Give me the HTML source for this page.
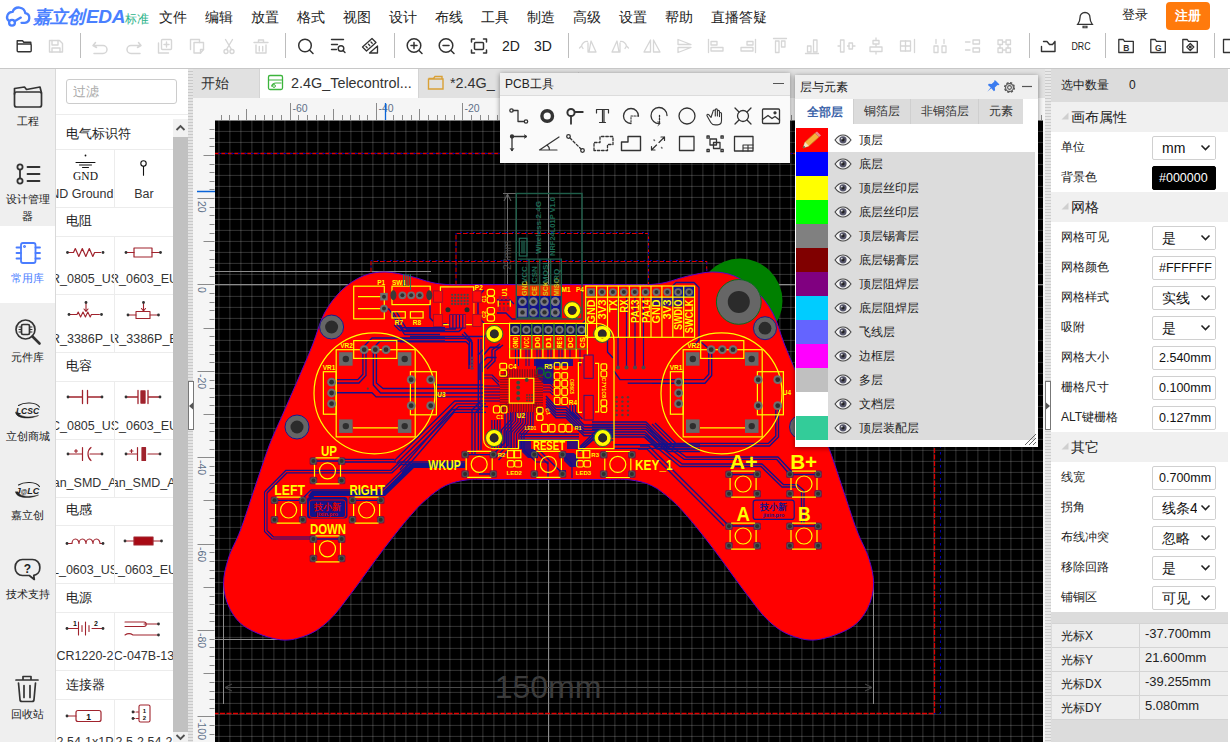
<!DOCTYPE html><html><head><meta charset="utf-8"><title>EDA</title><style>
*{box-sizing:border-box}
html,body{margin:0;padding:0}
body{width:1230px;height:742px;overflow:hidden;position:relative;background:#fff;font-family:"Liberation Sans",sans-serif;font-size:13px;color:#222}
.abs{position:absolute}
#menubar{position:absolute;left:0;top:0;width:1230px;height:32px;background:#fff}
.mi{position:absolute;top:8px;font-size:14px;color:#222;white-space:nowrap;line-height:18px}
#toolbar{position:absolute;left:0;top:32px;width:1230px;height:36px;background:#fff}
#hline{position:absolute;left:0;top:68px;width:1230px;height:1px;background:#c8c8c8}
.tsep{position:absolute;top:1px;width:1px;height:25px;background:#bdbdbd}
#leftnav{position:absolute;left:0;top:69px;width:56px;height:673px;background:#efefef;border-right:1px solid #d9d9d9}
.nv{position:absolute;left:0;width:55px;text-align:center;font-size:11px;color:#222;line-height:17px}
#lib{position:absolute;left:56px;top:69px;width:132px;height:673px;background:#fff;overflow:hidden}
.lh{position:absolute;left:10px;font-size:13px;color:#222;line-height:18px;white-space:nowrap}
.ll{position:absolute;font-size:12.5px;color:#333;line-height:18px;height:18px;overflow:hidden}
.ll span{position:absolute;left:50%;top:0;transform:translateX(-50%);white-space:nowrap}
.hl{position:absolute;left:0;width:117px;height:1px;background:#ececec}
.vl{position:absolute;left:58px;width:1px;background:#ececec}
#split1{position:absolute;left:188px;top:69px;width:5px;height:673px;background:#e4e4e4 repeating-linear-gradient(180deg,rgba(255,255,255,.0) 0 2px,rgba(120,120,120,.25) 2px 3px)}
#tabs{position:absolute;left:193px;top:69px;width:852px;height:29px;background:#e1e1e1}
.tab{position:absolute;top:0;height:29px;font-size:14.4px;line-height:29px;color:#333;white-space:nowrap}
#rpanel{position:absolute;left:1051px;top:69px;width:179px;height:673px;background:#fff;font-size:12px}
.rsec{position:absolute;left:0;width:177px;height:30px;background:#f0f0f0;font-size:14px;line-height:30px;padding-left:20px;color:#222}
.rl{position:absolute;left:10px;font-size:12px;line-height:30px;color:#222;white-space:nowrap}
.rin{position:absolute;left:101px;width:64px;height:24px;border:1px solid #d0d0d0;border-radius:2px;background:#fff;font-size:12.5px;line-height:22px;padding-left:6px;color:#111;white-space:nowrap;overflow:hidden}
.fl{position:absolute;background:#fff;box-shadow:0 1px 5px rgba(0,0,0,.45)}
.lrow{position:absolute;left:33px;width:207px;height:24px;background:#dcdcdc;font-size:12px;line-height:24px;color:#222}
.lsw{position:absolute;left:1px;width:32px;height:24px}
</style></head><body><div id="menubar"><svg class="abs" style="left:0;top:0" width="32" height="32" viewBox="0 0 32 32" fill="none" stroke="#4a80ff" stroke-width="2.300" stroke-linecap="round"><path d="M21.500 22.800H24.800A4.900 4.900 0 0 0 25.300 13.100A6.600 6.600 0 0 0 12.600 11.800A5.300 5.300 0 0 0 8.800 21"/><circle cx="12" cy="22.800" r="2.900"/><path d="M14.600 21.300L20.800 17.600"/></svg><div class="abs" style="left:33px;top:5px;font-size:18px;line-height:24px;font-weight:bold;font-style:italic;color:#4a80ff;white-space:nowrap;letter-spacing:-1px">嘉立创<span style="letter-spacing:-.3px;font-size:19px;margin-left:2px">EDA</span></div><div class="abs" style="left:125px;top:12px;font-size:12px;line-height:14px;color:#2bb38a;white-space:nowrap;letter-spacing:-.5px">标准</div><div class="mi" style="left:159px">文件</div><div class="mi" style="left:205px">编辑</div><div class="mi" style="left:251px">放置</div><div class="mi" style="left:297px">格式</div><div class="mi" style="left:343px">视图</div><div class="mi" style="left:389px">设计</div><div class="mi" style="left:435px">布线</div><div class="mi" style="left:481px">工具</div><div class="mi" style="left:527px">制造</div><div class="mi" style="left:573px">高级</div><div class="mi" style="left:619px">设置</div><div class="mi" style="left:665px">帮助</div><div class="mi" style="left:711px">直播答疑</div><svg class="abs" style="left:1075px;top:10px" width="20" height="20" viewBox="0 0 20 20"><path d="M10 2.500c-3 0-5 2.300-5 5.200 0 3.600-1.500 5.600-2.300 6.600h14.600c-.800-1-2.300-3-2.300-6.600 0-2.900-2-5.200-5-5.200z" fill="none" stroke="#333" stroke-width="1.300"/><path d="M8 16.300h4v1.500H8z" fill="none" stroke="#333" stroke-width="1.100"/></svg><div class="mi" style="left:1122px;top:6px;font-size:13px">登录</div><div class="abs" style="left:1166px;top:2px;width:44px;height:28px;border-radius:4px;background:#ff7a0c;color:#fff;font-weight:bold;font-size:13px;line-height:28px;text-align:center">注册</div></div><div id="toolbar"><div class="tsep" style="left:80px"></div><div class="tsep" style="left:285px"></div><div class="tsep" style="left:394px"></div><div class="tsep" style="left:568px"></div><div class="tsep" style="left:1029px"></div><div class="tsep" style="left:1105px"></div><div class="tsep" style="left:1214px"></div><svg class="abs" style="left:0;top:0" width="1230" height="36" viewBox="0 32 1230 36" fill="none" stroke-linecap="round" stroke-linejoin="round"><g stroke="#333" stroke-width="1.4"><path d="M17.200 44V40.700h5.300l1.300 1.600h7V44"/><rect x="17.200" y="44" width="14" height="7.800" rx="1"/></g><g stroke="#d6d6d6" stroke-width="1.4"><path d="M49.500 40.500h10l3 3v8.500h-13z"/><path d="M52 40.500v4.500h6v-4.500M52 52v-4h8v4"/></g><g stroke="#d6d6d6" stroke-width="1.5"><path d="M95.500 42.500l-2.500 3 3.500 2M93.500 45.500h9.500a4 4 0 0 1 0 8h-9"/></g><g stroke="#d6d6d6" stroke-width="1.5"><path d="M138.500 42.500l2.500 3-3.500 2M140.500 45.500h-9.500a4 4 0 0 0 0 8h9"/></g><g stroke="#d6d6d6" stroke-width="1.4"><rect x="161.500" y="39.500" width="10" height="10" rx="1"/><path d="M158.500 43v10h10M166.500 42v5M164 44.500h5"/></g><g stroke="#d6d6d6" stroke-width="1.4"><path d="M190.500 49.500v-10h9v3"/><path d="M194 42.500h9.500v7l-3 3.500H194z"/><path d="M203.500 49.500h-3v3.500"/></g><g stroke="#d6d6d6" stroke-width="1.4"><path d="M225.500 39.500l6 10M232.500 39.500l-6 10"/><circle cx="226" cy="51.500" r="2"/><circle cx="232" cy="51.500" r="2"/></g><g stroke="#d6d6d6" stroke-width="1.4"><path d="M254 42.500h14M258.500 42.500v-2.500h5v2.500M256 45v8h10v-8M259.300 46.500v4.500M262.700 46.500v4.500"/></g><g stroke="#333" stroke-width="1.5"><circle cx="305" cy="45.500" r="6.300"/><path d="M309.500 50l3.500 3.500"/></g><g stroke="#333" stroke-width="1.4"><path d="M331.500 39.500h12M331.500 44.500h6M331.500 49.500h5"/><circle cx="341" cy="48.500" r="2.800"/><path d="M343 50.500l2 2"/></g><g stroke="#333" stroke-width="1.3"><path d="M362.500 47l9.500-8.500 4 4-9.500 8.500z"/><path d="M366 46.500l1.200 1.200M368.500 44.300l1.200 1.200M371 42l1.200 1.200"/><path d="M377.500 46v7h-8z"/></g><g stroke="#333" stroke-width="1.5"><circle cx="414" cy="45.500" r="6.800"/><path d="M419 50.500l3 3M411 45.500h6M414 42.500v6"/></g><g stroke="#333" stroke-width="1.5"><circle cx="446" cy="45.500" r="6.800"/><path d="M451 50.500l3 3M443 45.500h6"/></g><g stroke="#333" stroke-width="1.5"><path d="M471.500 42v-3h3M483.500 39h3v3M486.500 50v3h-3M474.500 53h-3v-3"/><rect x="474.500" y="42.500" width="9" height="7" rx="1"/></g><g stroke="#d6d6d6" stroke-width="1.3"><path d="M589 52h7l-5-11zM588 52v-9M581.500 46.500a5.500 5.500 0 0 1 6-5M583 48.500l-1.500-2.500-2 2"/></g><g stroke="#d6d6d6" stroke-width="1.3"><path d="M619 52h-7l5-11zM620 52v-9M626.500 46.500a5.500 5.500 0 0 0-6-5M625 48.500l1.500-2.500 2 2"/></g><g stroke="#d6d6d6" stroke-width="1.3"><path d="M650.500 40v12h-6.500zM653.500 40v12h6.500z"/></g><g stroke="#d6d6d6" stroke-width="1.3"><path d="M678 39.500v5h13zM678 52.500v-5h13z"/></g><g stroke="#d6d6d6" stroke-width="1.3"><path d="M708.500 39.500v13"/><rect x="711" y="41.500" width="6" height="3.500"/><rect x="711" y="47.500" width="12" height="3.500"/></g><g stroke="#d6d6d6" stroke-width="1.3"><path d="M755.500 39.500v13"/><rect x="747" y="41.500" width="6" height="3.500"/><rect x="741" y="47.500" width="12" height="3.500"/></g><g stroke="#d6d6d6" stroke-width="1.3"><path d="M773.500 38.500h13"/><rect x="775.500" y="41" width="3.500" height="11.500"/><rect x="781.500" y="41" width="3.500" height="6"/></g><g stroke="#d6d6d6" stroke-width="1.3"><path d="M805.500 53.500h13"/><rect x="807.500" y="46" width="3.500" height="6"/><rect x="813.500" y="40" width="3.500" height="12"/></g><g stroke="#d6d6d6" stroke-width="1.3"><path d="M838 46h2M847.500 46h1.500M853 46h2"/><rect x="840.500" y="40" width="3.500" height="12"/><rect x="849" y="43" width="3.500" height="6"/></g><g stroke="#d6d6d6" stroke-width="1.3"><path d="M876 38v2M876 44.500v2M876 52v2"/><rect x="873" y="40.500" width="6" height="3.500"/><rect x="870" y="47" width="12" height="4.500"/></g><g stroke="#d6d6d6" stroke-width="1.3"><rect x="900.500" y="41" width="10" height="10"/><path d="M905.500 41v10M900.500 46h10M914.500 39.500v13"/></g><g stroke="#d6d6d6" stroke-width="1.3"><rect x="934" y="46" width="4" height="6.500"/><rect x="942" y="46" width="4" height="6.500"/><path d="M936 39.500v4M944 39.500v4"/></g><g stroke="#d6d6d6" stroke-width="1.3"><rect x="973" y="40" width="6.500" height="4"/><rect x="973" y="48" width="6.500" height="4"/><path d="M965.500 42h4.500M965.500 50h4.500"/></g><g stroke="#d6d6d6" stroke-width="1.3"><rect x="998" y="40" width="4.500" height="4.500"/><rect x="1006" y="40" width="4.500" height="4.500"/><rect x="998" y="48" width="4.500" height="4.500"/><rect x="1006" y="48" width="4.500" height="4.500"/><path d="M1002.500 42h3.500M1002.500 50h3.500M1000 44.500v3.500M1008 44.500v3.500"/></g><g stroke="#333" stroke-width="1.4"><path d="M1043.500 41.500h3.500l2.500 3h3l2.500-3M1055 41.500v10h-13.500v-5"/></g><g stroke="#333" stroke-width="1.3"><path d="M1118.8 39.500h4.500l1.200 1.800h8.800v11.200h-14.500z"/></g><text x="1126.3" y="51" font-size="8.500" font-weight="bold" fill="#333" stroke="none" text-anchor="middle" font-family="Liberation Sans, sans-serif">B</text><g stroke="#333" stroke-width="1.3"><path d="M1150.8 39.500h4.500l1.200 1.800h8.800v11.200h-14.500z"/></g><text x="1158.3" y="51" font-size="8.500" font-weight="bold" fill="#333" stroke="none" text-anchor="middle" font-family="Liberation Sans, sans-serif">G</text><g stroke="#333" stroke-width="1.3"><path d="M1182.800 39.500h4.500l1.200 1.800h8.800v11.200h-14.500z"/><path d="M1190.300 43.500l3.500 3.500-3.500 3.500-3.500-3.500z"/><circle cx="1190.300" cy="47" r=".8" fill="#333"/></g><g stroke="#333" stroke-width="1.3"><path d="M1230 39.500h-6.500v13h6.500"/></g></svg><div class="abs" style="left:500px;top:5px;width:22px;font-size:14px;line-height:18px;color:#222;text-align:center">2D</div><div class="abs" style="left:532px;top:5px;width:22px;font-size:14px;line-height:18px;color:#222;text-align:center">3D</div><div class="abs" style="left:1068px;top:7px;width:26px;font-size:11px;line-height:14px;color:#222;text-align:center;transform:scaleX(.8)">DRC</div></div><div id="hline"></div><div id="leftnav"><div class="abs" style="left:0;top:157px;width:55px;height:77px;background:#fff"></div><svg class="abs" style="left:0;top:0" width="55" height="673" viewBox="0 69 55 673" fill="none" stroke-linecap="round" stroke-linejoin="round"><g stroke="#333" stroke-width="1.7"><rect x="14.500" y="92" width="27" height="15" rx="2"/><path d="M14.500 94v-5.500l10-1.500 2 2.500 13.500-2.500 1.500 6"/></g><g stroke="#333" stroke-width="1.8"><circle cx="20" cy="167" r="2.600"/><circle cx="20" cy="181" r="2.600"/><path d="M20 169.600v8.800M27.500 167h12M27.500 174h12M27.500 181h12"/></g><g stroke="#4a7dff" stroke-width="1.8"><rect x="21" y="243" width="14.500" height="20" rx="2"/><path d="M16.500 247.500h4.500M16.500 253h4.500M16.500 258.500h4.500M35.500 247.500h4.500M35.500 253h4.500M35.500 258.500h4.500"/><circle cx="24.500" cy="246.500" r=".6"/></g><g stroke="#333" stroke-width="1.7"><circle cx="25.500" cy="329.500" r="9.500"/><path d="M32.500 336.500l7 7" stroke-width="2.600"/><rect x="21.500" y="324.500" width="8" height="10" rx="1.500"/><path d="M19 327h2.500M19 329.500h2.500M19 332h2.500M29.500 327h2.500M29.500 329.500h2.500M29.500 332h2.500" stroke-width="1"/></g><text x="27.500" y="414" font-size="8.500" font-weight="bold" font-style="italic" fill="#222" text-anchor="middle" font-family="Liberation Sans, sans-serif">LCSC</text><path d="M15.500 412.500C16.500 419 30 419.500 38.500 415.500C30 418 20 417.500 18 412.500Z" fill="#222" stroke="#222" stroke-width=".5"/><path d="M18.500 405.500C24 402 36 402 39.500 407" fill="none" stroke="#222" stroke-width="1.100"/><text x="27.500" y="493.500" font-size="9" font-weight="bold" font-style="italic" fill="#222" text-anchor="middle" font-family="Liberation Sans, sans-serif">J<tspan font-size="6.500">@</tspan>LC</text><path d="M15.500 492C16.500 498.500 30 499 38.500 495C30 497.500 20 497 18 492Z" fill="#222" stroke="#222" stroke-width=".5"/><path d="M18.500 485C24 481.500 36 481.500 39.500 486.500" fill="none" stroke="#222" stroke-width="1.100"/><g stroke="#333" stroke-width="1.7"><path d="M22.500 559.500h10a7.300 7.300 0 0 1 7.300 7.300v1.400a7.300 7.300 0 0 1-6 7.200l.500 4.100-5-4h-6.800a7.300 7.300 0 0 1-7.300-7.300v-1.400a7.300 7.300 0 0 1 7.300-7.300z"/></g><text x="27.500" y="572.500" font-size="12" font-weight="bold" fill="#222" text-anchor="middle" font-family="Liberation Sans, sans-serif">?</text><g stroke="#333" stroke-width="1.7"><path d="M16 680h22M23 680v-3.500h8V680M18.500 683l1.500 16.500a2 2 0 0 0 2 2h10a2 2 0 0 0 2-2l1.500-16.500M24 685.500v12M30 685.500v12"/></g></svg><div class="nv" style="top:44px;color:#222">工程</div><div class="nv" style="top:122px;color:#222">设计管理</div><div class="nv" style="top:139px;color:#222">器</div><div class="nv" style="top:201px;color:#4a7dff">常用库</div><div class="nv" style="top:280px;color:#222">元件库</div><div class="nv" style="top:359px;color:#222">立创商城</div><div class="nv" style="top:438px;color:#222">嘉立创</div><div class="nv" style="top:517px;color:#222">技术支持</div><div class="nv" style="top:637px;color:#222">回收站</div></div><div id="lib"><div class="abs" style="left:10px;top:10px;width:111px;height:25px;border:1px solid #ccc;border-radius:3px;font-size:13px;line-height:23px;padding-left:6px;color:#aaa">过滤</div><div class="hl" style="top:45px;width:132px"></div><div class="lh" style="top:56px">电气标识符</div><div class="lh" style="top:143px">电阻</div><div class="lh" style="top:288px">电容</div><div class="lh" style="top:432px">电感</div><div class="lh" style="top:519.5px">电源</div><div class="lh" style="top:606.5px">连接器</div><div class="hl" style="top:79.5px"></div><div class="hl" style="top:137.5px"></div><div class="vl" style="top:79.5px;height:58.0px"></div><div class="ll" style="left:0;width:58px;top:115.5px"><span style="margin-left:-8px">GND Ground</span></div><div class="ll" style="left:59px;width:58px;top:115.5px"><span>Bar</span></div><div class="hl" style="top:166.5px"></div><div class="hl" style="top:224.5px"></div><div class="vl" style="top:166.5px;height:58.0px"></div><div class="ll" style="left:0;width:58px;top:201px"><span>R_0805_US</span></div><div class="ll" style="left:59px;width:58px;top:201px"><span>R_0603_EU</span></div><div class="hl" style="top:224.5px"></div><div class="hl" style="top:283px"></div><div class="vl" style="top:224.5px;height:58.5px"></div><div class="ll" style="left:0;width:58px;top:260.5px"><span>R_3386P_U</span></div><div class="ll" style="left:59px;width:58px;top:260.5px"><span>R_3386P_E</span></div><div class="hl" style="top:312px"></div><div class="hl" style="top:370px"></div><div class="vl" style="top:312px;height:58px"></div><div class="ll" style="left:0;width:58px;top:347.5px"><span>C_0805_US</span></div><div class="ll" style="left:59px;width:58px;top:347.5px"><span>C_0603_EU</span></div><div class="hl" style="top:370px"></div><div class="hl" style="top:428px"></div><div class="vl" style="top:370px;height:58px"></div><div class="ll" style="left:0;width:58px;top:405px"><span>Tan_SMD_A1</span></div><div class="ll" style="left:59px;width:58px;top:405px"><span>Tan_SMD_A2</span></div><div class="hl" style="top:456px"></div><div class="hl" style="top:514px"></div><div class="vl" style="top:456px;height:58px"></div><div class="ll" style="left:0;width:58px;top:491.5px"><span>L_0603_US</span></div><div class="ll" style="left:59px;width:58px;top:491.5px"><span>L_0603_EU</span></div><div class="hl" style="top:543px"></div><div class="hl" style="top:601px"></div><div class="vl" style="top:543px;height:58px"></div><div class="ll" style="left:0;width:58px;top:578px"><span>CR1220-2</span></div><div class="ll" style="left:59px;width:58px;top:578px"><span>C-047B-13</span></div><div class="hl" style="top:630px"></div><div class="hl" style="top:688px"></div><div class="vl" style="top:630px;height:58px"></div><div class="ll" style="left:0;width:58px;top:664px"><span>2.54-1x1P</span></div><div class="ll" style="left:59px;width:58px;top:664px"><span>2.5-2.54-2</span></div><svg class="abs" style="left:0;top:0" width="117" height="673" viewBox="56 69 117 673" fill="none" stroke-linecap="round" stroke-linejoin="round"><g stroke="#111" stroke-width="1"><path d="M76 162.500h19M79.500 165h12M82.500 167.500h6"/></g><circle cx="85.5" cy="155.5" r="0.9" fill="#111" stroke="none"/><text x="85.500" y="180" font-size="11.500" fill="#111" stroke="none" text-anchor="middle" font-family="Liberation Serif, serif">GND</text><g stroke="#111" stroke-width="1.1"><circle cx="143.500" cy="163.500" r="2.700"/><path d="M143.500 166.300v9"/></g><g stroke="#a0232d" stroke-width="1.2"><path d="M67.500 252.500h6l1.800-4 3.500 8 3.500-8 3.500 8 3.500-8 3.500 8 1.800-4h6"/></g><circle cx="67.5" cy="252.5" r="1.4" fill="#333" stroke="none"/><circle cx="103" cy="252.5" r="1.4" fill="#333" stroke="none"/><g stroke="#a0232d" stroke-width="1.2"><path d="M126 252.500h8M152 252.500h8"/><rect x="134" y="248" width="18" height="9"/></g><circle cx="126" cy="252.5" r="1.4" fill="#333" stroke="none"/><circle cx="160.5" cy="252.5" r="1.4" fill="#333" stroke="none"/><g stroke="#a0232d" stroke-width="1.1"><path d="M69 314.500h8l1.200-2.500 2.400 5 2.400-5 2.400 5 2.400-5 2.400 5 1.200-2.500h8M86 303v8M84 309l2 2.500 2-2.500"/></g><circle cx="69" cy="314.5" r="1.4" fill="#333" stroke="none"/><circle cx="101.5" cy="314.5" r="1.4" fill="#333" stroke="none"/><circle cx="86" cy="302.5" r="1.4" fill="#333" stroke="none"/><g stroke="#a0232d" stroke-width="1.1"><path d="M128 315h8M150 315h8M143.500 303v7.500M141.500 308.500l2 2.500 2-2.500"/><rect x="136" y="311.500" width="14" height="7"/></g><circle cx="128" cy="315" r="1.4" fill="#333" stroke="none"/><circle cx="158.5" cy="315" r="1.4" fill="#333" stroke="none"/><circle cx="143.5" cy="302.5" r="1.4" fill="#333" stroke="none"/><g stroke="#a0232d" stroke-width="1.3"><path d="M68 397h14.500M87.500 397h14.500M82.500 390.500v13M87.500 390.500v13"/></g><circle cx="68" cy="397" r="1.4" fill="#333" stroke="none"/><circle cx="102" cy="397" r="1.4" fill="#333" stroke="none"/><g stroke="#a0232d" stroke-width="1.3"><path d="M126 397h12M148 397h12M138 390.500v13M148 390.500v13"/><rect x="141" y="391" width="4" height="12" fill="#a0232d"/></g><circle cx="126" cy="397" r="1.4" fill="#333" stroke="none"/><circle cx="160" cy="397" r="1.4" fill="#333" stroke="none"/><g stroke="#a0232d" stroke-width="1.2"><path d="M68 454h14M90 454h12M82.500 447.500v13M91 447.500c-4 3-4 10 0 13M76 449.500v3M74.500 451h3"/></g><circle cx="68" cy="454" r="1.4" fill="#333" stroke="none"/><circle cx="102" cy="454" r="1.4" fill="#333" stroke="none"/><g stroke="#a0232d" stroke-width="1.2"><path d="M126 454h11M148 454h12M137.500 447.500v13M131.500 449.500v3M130 451h3"/><rect x="142" y="447.500" width="3.500" height="13" fill="#a0232d"/></g><circle cx="126" cy="454" r="1.4" fill="#333" stroke="none"/><circle cx="160" cy="454" r="1.4" fill="#333" stroke="none"/><g stroke="#a0232d" stroke-width="1.2"><path d="M67 543.500h5a3.500 4.500 0 0 1 7 0a3.500 4.500 0 0 1 7 0a3.500 4.500 0 0 1 7 0a3.500 4.500 0 0 1 7 0h3"/></g><circle cx="67" cy="543.5" r="1.4" fill="#333" stroke="none"/><circle cx="103" cy="543.5" r="1.4" fill="#333" stroke="none"/><g stroke="#a0232d" stroke-width="1.2"><path d="M125 541h9M153 541h8"/><rect x="134" y="537" width="19" height="8" fill="#a80a14"/></g><circle cx="125" cy="541" r="1.4" fill="#333" stroke="none"/><circle cx="161.5" cy="541" r="1.4" fill="#333" stroke="none"/><g stroke="#a0232d" stroke-width="1.1"><path d="M67 628.500h11M92 628.500h11M78.500 622v13M82 625.500v6M85.500 622v13M89 625.500v6"/></g><circle cx="67" cy="628.5" r="1.4" fill="#333" stroke="none"/><circle cx="103" cy="628.5" r="1.4" fill="#333" stroke="none"/><text x="73" y="626" font-size="7" fill="#111" stroke="none" font-family="Liberation Sans, sans-serif" font-weight="bold">1</text><text x="94" y="626" font-size="7" fill="#111" stroke="none" font-family="Liberation Sans, sans-serif" font-weight="bold">2</text><g stroke="#a0232d" stroke-width="1.1"><path d="M125 622h7M125 626.500h7M132 622h12a2.200 2.200 0 0 1 0 4.500h-12M144 624h14M125 635c3-2 5-2 8 0h25"/></g><circle cx="158.5" cy="624" r="1.4" fill="#333" stroke="none"/><circle cx="158.5" cy="635" r="1.4" fill="#333" stroke="none"/><g stroke="#a0232d" stroke-width="1.2"><path d="M67 716h9"/><rect x="76" y="710.500" width="25" height="11" rx="2"/></g><circle cx="67" cy="716" r="1.4" fill="#333" stroke="none"/><text x="88.500" y="720" font-size="8.500" fill="#111" stroke="none" text-anchor="middle" font-family="Liberation Sans, sans-serif" font-weight="bold">1</text><g stroke="#a0232d" stroke-width="1.1"><rect x="139" y="705" width="11" height="17" rx="1.500"/><path d="M133 712h6M133 718.500h6" stroke-dasharray="2 1.500"/></g><circle cx="133" cy="712" r="1.4" fill="#333" stroke="none"/><circle cx="133" cy="718.5" r="1.4" fill="#333" stroke="none"/><text x="144.500" y="713" font-size="6" fill="#111" stroke="none" text-anchor="middle" font-family="Liberation Sans, sans-serif" font-weight="bold">1</text><text x="144.500" y="720" font-size="6" fill="#111" stroke="none" text-anchor="middle" font-family="Liberation Sans, sans-serif" font-weight="bold">2</text></svg><div class="abs" style="left:117px;top:50px;width:15px;height:623px;background:#f1f1f1"></div><div class="abs" style="left:117px;top:68px;width:15px;height:595px;background:#c1c1c1"></div><svg class="abs" style="left:117px;top:50px" width="15" height="623" viewBox="0 0 15 623"><path d="M3.500 11l4-4 4 4" fill="none" stroke="#505050" stroke-width="1.800"/><path d="M3.500 616l4 4 4-4" fill="none" stroke="#505050" stroke-width="1.800"/></svg></div><div id="split1"></div><div id="tabs"><div class="tab" style="left:8px;font-size:14px">开始</div><div class="tab" style="left:66px;width:160px;background:#fff;border-left:1px solid #d4d4d4;border-right:1px solid #d4d4d4;padding-left:31px">2.4G_Telecontrol...</div><div class="tab" style="left:257px">*2.4G_</div><svg class="abs" style="left:0;top:0" width="400" height="29" viewBox="193 69 400 29" fill="none"><rect x="268.500" y="75.500" width="14" height="14" rx="1.500" stroke="#3cb43c" stroke-width="1.300"/><path d="M269 80h13M271.500 86.500c.500-2 2-3.500 4.500-3.500h5.500" stroke="#3cb43c" stroke-width="1.200"/><circle cx="274" cy="86" r="1.400" stroke="#3cb43c" stroke-width="1"/><path d="M428.500 78.500h5l1.500-2h7v2.500M428.500 78.500v10.500h14.500V79h-14.500" stroke="#d9a036" stroke-width="1.400"/></svg><div class="abs" style="left:385px;top:3px;width:1px;height:24px;background:#cfcfcf"></div></div><div class="abs" id="cv" style="left:193px;top:98px;width:852px;height:644px;background:#f5f5f5;overflow:hidden"><svg class="abs" style="left:0;top:0" width="852" height="644" viewBox="193 98 852 644" font-family="Liberation Sans, sans-serif"><defs><pattern id="g" x="218" y="131" width="11" height="11" patternUnits="userSpaceOnUse"><rect x="0" y="0" width="1" height="11" fill="#fff" fill-opacity=".27"/><rect x="0" y="0" width="11" height="1" fill="#fff" fill-opacity=".27"/></pattern><clipPath id="cc"><rect x="215" y="120.500" width="828" height="622"/></clipPath></defs><path d="M221.5 120v-5M229.5 120v-5M238.5 120v-5M246.5 120v-11M255.5 120v-5M264.5 120v-5M272.5 120v-5M281.5 120v-5M290.5 120v-17M298.5 120v-5M307.5 120v-5M316.5 120v-5M324.5 120v-5M333.5 120v-11M342.5 120v-5M350.5 120v-5M359.5 120v-5M367.5 120v-5M376.5 120v-17M385.5 120v-5M393.5 120v-5M402.5 120v-5M411.5 120v-5M419.5 120v-11M428.5 120v-5M437.5 120v-5M445.5 120v-5M454.5 120v-5M462.5 120v-17M471.5 120v-5M480.5 120v-5M488.5 120v-5M497.5 120v-5M506.5 120v-11M514.5 120v-5M523.5 120v-5M532.5 120v-5M540.5 120v-5M549.5 120v-17M558.5 120v-5M566.5 120v-5M575.5 120v-5M583.5 120v-5M592.5 120v-11M601.5 120v-5M609.5 120v-5M618.5 120v-5M627.5 120v-5M635.5 120v-17M644.5 120v-5M653.5 120v-5M661.5 120v-5M670.5 120v-5M678.5 120v-11M687.5 120v-5M696.5 120v-5M704.5 120v-5M713.5 120v-5M722.5 120v-17M730.5 120v-5M739.5 120v-5M748.5 120v-5M756.5 120v-5M765.5 120v-11M774.5 120v-5M782.5 120v-5M791.5 120v-5M799.5 120v-5M808.5 120v-17M817.5 120v-5M825.5 120v-5M834.5 120v-5M843.5 120v-5M851.5 120v-11M860.5 120v-5M869.5 120v-5M877.5 120v-5M886.5 120v-5M894.5 120v-17M903.5 120v-5M912.5 120v-5M920.5 120v-5M929.5 120v-5M938.5 120v-11M946.5 120v-5M955.5 120v-5M964.5 120v-5M972.5 120v-5M981.5 120v-17M990.5 120v-5M998.5 120v-5M1007.5 120v-5M1015.5 120v-5M1024.5 120v-11M1033.5 120v-5M1041.5 120v-5M214.5 734.5h-5M214.5 725.5h-5M214.5 716.5h-17M214.5 708.5h-5M214.5 699.5h-5M214.5 691.5h-5M214.5 682.5h-5M214.5 673.5h-11M214.5 665.5h-5M214.5 656.5h-5M214.5 647.5h-5M214.5 639.5h-5M214.5 630.5h-17M214.5 621.5h-5M214.5 613.5h-5M214.5 604.5h-5M214.5 596.5h-5M214.5 587.5h-11M214.5 578.5h-5M214.5 570.5h-5M214.5 561.5h-5M214.5 552.5h-5M214.5 544.5h-17M214.5 535.5h-5M214.5 526.5h-5M214.5 518.5h-5M214.5 509.5h-5M214.5 500.5h-11M214.5 492.5h-5M214.5 483.5h-5M214.5 475.5h-5M214.5 466.5h-5M214.5 457.5h-17M214.5 449.5h-5M214.5 440.5h-5M214.5 431.5h-5M214.5 423.5h-5M214.5 414.5h-11M214.5 405.5h-5M214.5 397.5h-5M214.5 388.5h-5M214.5 380.5h-5M214.5 371.5h-17M214.5 362.5h-5M214.5 354.5h-5M214.5 345.5h-5M214.5 336.5h-5M214.5 328.5h-11M214.5 319.5h-5M214.5 310.5h-5M214.5 302.5h-5M214.5 293.5h-5M214.5 284.5h-17M214.5 276.5h-5M214.5 267.5h-5M214.5 259.5h-5M214.5 250.5h-5M214.5 241.5h-11M214.5 233.5h-5M214.5 224.5h-5M214.5 215.5h-5M214.5 207.5h-5M214.5 198.5h-17M214.5 189.5h-5M214.5 181.5h-5M214.5 172.5h-5M214.5 164.5h-5M214.5 155.5h-11M214.5 146.5h-5M214.5 138.5h-5M214.5 129.5h-5" stroke="#8a8a8a" stroke-width="1" fill="none"/><text x="292.5" y="111.500" font-size="10.500" fill="#5f7189">-60</text><text x="378.5" y="111.500" font-size="10.500" fill="#5f7189">-40</text><text x="464.5" y="111.500" font-size="10.500" fill="#5f7189">-20</text><text x="551.5" y="111.500" font-size="10.500" fill="#5f7189">0</text><text x="637.5" y="111.500" font-size="10.500" fill="#5f7189">20</text><text x="724.5" y="111.500" font-size="10.500" fill="#5f7189">40</text><text x="810.5" y="111.500" font-size="10.500" fill="#5f7189">60</text><text x="896.5" y="111.500" font-size="10.500" fill="#5f7189">80</text><text x="983.5" y="111.500" font-size="10.500" fill="#5f7189">100</text><text transform="translate(198 719) rotate(90)" font-size="10.500" fill="#5f7189">-100</text><text transform="translate(198 633) rotate(90)" font-size="10.500" fill="#5f7189">-80</text><text transform="translate(198 547) rotate(90)" font-size="10.500" fill="#5f7189">-60</text><text transform="translate(198 460) rotate(90)" font-size="10.500" fill="#5f7189">-40</text><text transform="translate(198 374) rotate(90)" font-size="10.500" fill="#5f7189">-20</text><text transform="translate(198 287) rotate(90)" font-size="10.500" fill="#5f7189">0</text><text transform="translate(198 201) rotate(90)" font-size="10.500" fill="#5f7189">20</text><path d="M385.500 103v17M197 191.500h18" stroke="#0a64d8" stroke-width="1.300"/><rect x="215" y="120.500" width="828" height="622" fill="#000"/><path d="M218.9 120V742M229.9 120V742M240.9 120V742M251.9 120V742M262.9 120V742M273.9 120V742M284.9 120V742M295.9 120V742M306.9 120V742M317.9 120V742M328.9 120V742M339.9 120V742M350.9 120V742M361.9 120V742M372.9 120V742M383.9 120V742M394.9 120V742M405.9 120V742M416.9 120V742M427.9 120V742M438.9 120V742M449.9 120V742M460.9 120V742M471.9 120V742M482.9 120V742M493.9 120V742M504.9 120V742M515.9 120V742M526.9 120V742M537.9 120V742M548.9 120V742M559.9 120V742M570.9 120V742M581.9 120V742M592.9 120V742M603.9 120V742M614.9 120V742M625.9 120V742M636.9 120V742M647.9 120V742M658.9 120V742M669.9 120V742M680.9 120V742M691.9 120V742M702.9 120V742M713.9 120V742M724.9 120V742M735.9 120V742M746.9 120V742M757.9 120V742M768.9 120V742M779.9 120V742M790.9 120V742M801.9 120V742M812.9 120V742M823.9 120V742M834.9 120V742M845.9 120V742M856.9 120V742M867.9 120V742M878.9 120V742M889.9 120V742M900.9 120V742M911.9 120V742M922.9 120V742M933.9 120V742M944.9 120V742M955.9 120V742M966.9 120V742M977.9 120V742M988.9 120V742M999.9 120V742M1010.9 120V742M1021.9 120V742M1032.9 120V742" stroke="#fff" stroke-opacity=".2" stroke-width="1" fill="none"/><path d="M215 131.4H1043M215 142.4H1043M215 153.4H1043M215 164.4H1043M215 175.4H1043M215 186.4H1043M215 197.4H1043M215 208.4H1043M215 219.4H1043M215 230.4H1043M215 241.4H1043M215 252.4H1043M215 263.4H1043M215 274.4H1043M215 285.4H1043M215 296.4H1043M215 307.4H1043M215 318.4H1043M215 329.4H1043M215 340.4H1043M215 351.4H1043M215 362.4H1043M215 373.4H1043M215 384.4H1043M215 395.4H1043M215 406.4H1043M215 417.4H1043M215 428.4H1043M215 439.4H1043M215 450.4H1043M215 461.4H1043M215 472.4H1043M215 483.4H1043M215 494.4H1043M215 505.4H1043M215 516.4H1043M215 527.4H1043M215 538.4H1043M215 549.4H1043M215 560.4H1043M215 571.4H1043M215 582.4H1043M215 593.4H1043M215 604.4H1043M215 615.4H1043M215 626.4H1043M215 637.4H1043M215 648.4H1043M215 659.4H1043M215 670.4H1043M215 681.4H1043M215 692.4H1043M215 703.4H1043M215 714.4H1043M215 725.4H1043M215 736.4H1043" stroke="#fff" stroke-opacity=".2" stroke-width="1" fill="none"/><g clip-path="url(#cc)"><path d="M215 271.500H431M215 639.500H282M223.500 583V704M873.500 583V704M548.500 120V742M215 284.500H1043" stroke="#8c8c8c" stroke-width="1" fill="none"/><path d="M225 687.500H872M225 687.500l7-3.500M225 687.500l7 3.500M872 687.500l-7-3.500M872 687.500l-7 3.500" stroke="#4a4a4a" stroke-width="1" fill="none"/><text x="548" y="698" font-size="32" fill="#3c3c3c" text-anchor="middle">150mm</text><path d="M507.500 194V320M504 201l3.500-7 3.500 7M503 193.500H517" stroke="#6a6a6a" stroke-width="1" fill="none"/><text transform="translate(510.500 270) rotate(-90)" font-size="10.500" fill="#4a4a4a">23mm</text><circle cx="740" cy="301" r="42.500" fill="#008000"/><path d="M215 153.500H934.500V713.500H215" stroke="#e00000" stroke-width="1.300" stroke-dasharray="5 1.500" fill="none"/><path d="M215 153.500H940.500V713.500H934" stroke="#0000b4" stroke-width="1" stroke-dasharray="2.500 4" stroke-dashoffset="3" fill="none"/><path d="M456 285V233.500H648.500V285M371 272V261.500H706.700V272" stroke="#e00000" stroke-width="1.100" stroke-dasharray="4.500 2" fill="none"/><path d="M456 285V232.500H648.500V285M371 272V260.500H706.700V272" stroke="#0000b4" stroke-width="1" stroke-dasharray="2 4.500" stroke-dashoffset="-4.500" fill="none"/><path d="M470 284.6C466.3 284.6 454.5 285 448 284.6C441.5 284.2 437.3 283.7 431 282.3C424.7 280.9 417.7 277.9 410 276.2C402.3 274.5 392.8 272 385 272C377.2 272 370.2 273 363 276C355.8 279 348.4 283.8 342 290C335.6 296.2 329.4 303.8 324.5 313C319.6 322.2 317.2 333.2 312.5 345C307.8 356.8 301.1 372.2 296 384C290.9 395.8 286.5 405.7 282 416C277.5 426.3 273.5 434.2 269 446C264.5 457.8 259.8 473 255 487C250.2 501 244.9 518.2 240.5 530C236.1 541.8 231.3 549 228.5 558C225.7 567 223.4 575.6 223.6 584C223.8 592.4 225.8 601 229.6 608.3C233.4 615.6 238 622.5 246.5 627.7C255 633 270.4 638.6 280.5 639.8C290.6 641 299.1 638.2 307.2 635C315.3 631.8 321.7 627.3 329 620.4C336.3 613.5 341.6 605.8 350.9 593.7C360.2 581.6 375.1 560.3 384.8 547.6C394.5 534.9 402.2 525.3 409.1 517.3C416 509.3 420 504.9 426.1 499.6C432.2 494.3 438.6 488.9 445.5 485.6C452.4 482.3 459.9 480.8 467.3 479.8C474.7 478.8 486.2 479.6 490 479.5L607.2 479.5C611 479.6 622.5 478.8 629.9 479.8C637.3 480.8 644.8 482.3 651.7 485.6C658.6 488.9 665 494.3 671.1 499.6C677.2 504.9 681.2 509.3 688.1 517.3C695 525.3 702.7 534.9 712.4 547.6C722.1 560.3 737 581.6 746.3 593.7C755.6 605.8 760.9 613.5 768.2 620.4C775.5 627.3 781.9 631.8 790 635C798.1 638.2 806.6 641 816.7 639.8C826.8 638.6 842.2 633 850.7 627.7C859.2 622.5 863.8 615.6 867.6 608.3C871.4 601 873.4 592.4 873.6 584C873.8 575.6 871.5 567 868.7 558C865.9 549 861.1 541.8 856.7 530C852.3 518.2 847 501 842.2 487C837.5 473 832.7 457.8 828.2 446C823.7 434.2 819.7 426.3 815.2 416C810.7 405.7 806.3 395.8 801.2 384C796.1 372.2 789.5 356.8 784.7 345C780 333.2 777.6 322.2 772.7 313C767.8 303.8 761.6 296.2 755.2 290C748.8 283.8 741.4 279 734.2 276C727 273 720 272 712.2 272C704.4 272 694.9 274.5 687.2 276.2C679.5 277.9 672.5 280.9 666.2 282.3C659.9 283.7 655.7 284.2 649.2 284.6C642.7 285 630.9 284.6 627.2 284.6Z" fill="#ff0000" stroke="#5a00c8" stroke-width="1"/><path d="M264.500 492V531.500L272 539H313.500" fill="none" stroke="#12128c" stroke-width="1.1" stroke-linejoin="round"/><path d="M267 493V530.500L273.500 537H313.500" fill="none" stroke="#12128c" stroke-width="1.1" stroke-linejoin="round"/><path d="M264.500 492L286 470.300H391L400 462H465" fill="none" stroke="#12128c" stroke-width="1.35" stroke-linejoin="round"/><path d="M267 493L287 472.800H392L401 464.500H465" fill="none" stroke="#12128c" stroke-width="1.35" stroke-linejoin="round"/><path d="M341.800 459.300H394.500" fill="none" stroke="#12128c" stroke-width="1.35" stroke-linejoin="round"/><path d="M341.800 462H396" fill="none" stroke="#12128c" stroke-width="1.35" stroke-linejoin="round"/><path d="M310 497.500L313 493.500H384L413 465.500H465" fill="none" stroke="#12128c" stroke-width="5"/><path d="M304 497L311 490H382L410 462.500" fill="none" stroke="#12128c" stroke-width="1.35" stroke-linejoin="round"/><rect x="307" y="497" width="40.500" height="21.500" rx="3" fill="#12128c"/><rect x="309.500" y="500" width="36" height="17.500" rx="2.500" fill="none" stroke="#e00000" stroke-width="1"/><path d="M274.400 500.300H303M352.600 500.300H381M313.500 539H341.600M313.500 461H341.600" fill="none" stroke="#12128c" stroke-width="1.35" stroke-linejoin="round"/><path d="M362.900 352V374.200L357.800 379.600H336.900M366 352V375.500L359 383H336.900" fill="none" stroke="#12128c" stroke-width="1.35" stroke-linejoin="round"/><path d="M376.400 352V383L383 388.500H483M373.300 352V385L380.500 393H483" fill="none" stroke="#12128c" stroke-width="1.35" stroke-linejoin="round"/><path d="M336 392.700H372L376 396.900H483" fill="none" stroke="#12128c" stroke-width="1.35" stroke-linejoin="round"/><path d="M364.200 346L372 338H445M375.300 346L380 341H445" fill="none" stroke="#12128c" stroke-width="1.35" stroke-linejoin="round"/><path d="M394.200 325L399.700 330.500H445M397 325L401 327.700H445" fill="none" stroke="#12128c" stroke-width="1.35" stroke-linejoin="round"/><path d="M430.700 379.700L436 385H483" fill="none" stroke="#12128c" stroke-width="1.35" stroke-linejoin="round"/><circle cx="367.800" cy="388.700" r="1.100" fill="#5a3a3a"/><path d="M394.5 460.6L454.7 401L484 401" fill="none" stroke="#12128c" stroke-width="1.35" stroke-linejoin="round"/><path d="M396.5 463.4L456.7 403.8L486 403.8" fill="none" stroke="#12128c" stroke-width="1.35" stroke-linejoin="round"/><path d="M398.5 466.2L458.7 406.6L488 406.6" fill="none" stroke="#12128c" stroke-width="1.35" stroke-linejoin="round"/><path d="M400 470L452 409.5L484 409.5" fill="none" stroke="#12128c" stroke-width="1.35" stroke-linejoin="round"/><path d="M402 472.8L454 412.3L486 412.3" fill="none" stroke="#12128c" stroke-width="1.35" stroke-linejoin="round"/><path d="M478.3 339L478.3 450" fill="none" stroke="#12128c" stroke-width="1.35" stroke-linejoin="round"/><path d="M481 339L481 450" fill="none" stroke="#12128c" stroke-width="1.35" stroke-linejoin="round"/><path d="M400 341.700H466L469 344.700V369M400 338.500H468L472 342.500V369" fill="none" stroke="#12128c" stroke-width="1.35" stroke-linejoin="round"/><path d="M500.7 347.4L490 347.4L483 355.5L483 372" fill="none" stroke="#12128c" stroke-width="1.6" stroke-linejoin="round"/><path d="M496.6 357.5L487 357.5L480 364L480 380" fill="none" stroke="#12128c" stroke-width="1.6" stroke-linejoin="round"/><path d="M393 312L404 331.500H459L462 328.500V316" fill="none" stroke="#12128c" stroke-width="1.35" stroke-linejoin="round"/><path d="M396 311L406.500 329H455.500V316" fill="none" stroke="#12128c" stroke-width="1.35" stroke-linejoin="round"/><path d="M410 336.500H483" fill="none" stroke="#12128c" stroke-width="1.35" stroke-linejoin="round"/><path d="M430 304.600V318L436 324H447M384 309H389L404.500 334.500H440" fill="none" stroke="#12128c" stroke-width="1.35" stroke-linejoin="round"/><path d="M469.500 341.500V365M472 341.500V365M469.500 341.500L462 334M472 341L464 332" fill="none" stroke="#12128c" stroke-width="1.35" stroke-linejoin="round"/><path d="M478 355L484 349V337L489 332" fill="none" stroke="#12128c" stroke-width="1.35" stroke-linejoin="round"/><path d="M472 454V410L480 402M475 454V413L483 405" fill="none" stroke="#12128c" stroke-width="1.35" stroke-linejoin="round"/><path d="M493 454.500L505 442.500V413M496 457L508 445V413M498.500 460L511 447.500V413" fill="none" stroke="#12128c" stroke-width="1.35" stroke-linejoin="round"/><path d="M479 474H493M465 454.600H493" fill="none" stroke="#12128c" stroke-width="1.35" stroke-linejoin="round"/><path d="M524 450L536 462H548V478M562.600 454.600L572 464V478" fill="none" stroke="#12128c" stroke-width="1.200"/><path d="M522 449H533L538 454V458H528L522 452Z" fill="#12128c" fill-opacity=".9"/><path d="M564 453H574L578 457V467H570L564 461Z" fill="#12128c" fill-opacity=".9"/><path d="M533 449L548 464M538 449L560 471H566" fill="none" stroke="#12128c" stroke-width="1.35" stroke-linejoin="round"/><path d="M592 422L646 422L668 444L700 444" fill="none" stroke="#12128c" stroke-width="1.35" stroke-linejoin="round"/><path d="M592 424.5L646 424.5L668 446.5L700 446.5" fill="none" stroke="#12128c" stroke-width="1.35" stroke-linejoin="round"/><path d="M592 427L646 427L668 449L700 449" fill="none" stroke="#12128c" stroke-width="1.35" stroke-linejoin="round"/><path d="M592 429.5L646 429.5L668 451.5L700 451.5" fill="none" stroke="#12128c" stroke-width="1.35" stroke-linejoin="round"/><path d="M580 446.5L595 432L645 432L657 444L690 444" fill="none" stroke="#12128c" stroke-width="1.35" stroke-linejoin="round"/><path d="M580 449L595 434.5L645 434.5L657 446.5L690 446.5" fill="none" stroke="#12128c" stroke-width="1.35" stroke-linejoin="round"/><path d="M580 451.5L595 437L645 437L657 449L690 449" fill="none" stroke="#12128c" stroke-width="1.35" stroke-linejoin="round"/><path d="M614 444.7L670 444.7" fill="none" stroke="#12128c" stroke-width="1.35" stroke-linejoin="round"/><path d="M614 448.4L670 448.4" fill="none" stroke="#12128c" stroke-width="1.35" stroke-linejoin="round"/><path d="M648 432L684 459.300H776.600L789.700 474.500" fill="none" stroke="#12128c" stroke-width="1.35" stroke-linejoin="round"/><path d="M650 430L686 457H778L792 472" fill="none" stroke="#12128c" stroke-width="1.35" stroke-linejoin="round"/><path d="M646 435L682 464H762L783.400 484.600H797L804 490.500V524" fill="none" stroke="#12128c" stroke-width="1.35" stroke-linejoin="round"/><path d="M644 437L680 466.500H761L782 487H796L801.500 492V524" fill="none" stroke="#12128c" stroke-width="1.35" stroke-linejoin="round"/><path d="M640 446L648.800 446L726.800 523.700" fill="none" stroke="#12128c" stroke-width="1.35" stroke-linejoin="round"/><path d="M638 449L647 449L724 526" fill="none" stroke="#12128c" stroke-width="1.35" stroke-linejoin="round"/><path d="M729.200 474.500H757M789.700 474.500H818M729.200 526H757M789.700 526H818" fill="none" stroke="#12128c" stroke-width="1.35" stroke-linejoin="round"/><path d="M708.800 352V374.200L703.900 379.600H652M711.700 352V375.500L705 383.200H652M700.200 341.400L708 348" fill="none" stroke="#12128c" stroke-width="1.35" stroke-linejoin="round"/><path d="M775.800 410V436L768.500 443.300H675.700L655 423M778.500 410V437L769.500 446H674.500L652 424" fill="none" stroke="#12128c" stroke-width="1.35" stroke-linejoin="round"/><path d="M614 371L620 379.6L652 379.6" fill="none" stroke="#12128c" stroke-width="1.35" stroke-linejoin="round"/><path d="M627.7 383.2L652 383.2" fill="none" stroke="#12128c" stroke-width="1.35" stroke-linejoin="round"/><rect x="673" y="286.500" width="21.500" height="10.500" fill="#12128c"/><rect x="652" y="297.500" width="32.500" height="9" fill="#12128c" fill-opacity=".85"/><path d="M618 297V367" fill="none" stroke="#12128c" stroke-width="1.2" stroke-linejoin="round"/><circle cx="618" cy="367.400" r="2" fill="#4a4a4a"/><path d="M626.5 297V367" fill="none" stroke="#12128c" stroke-width="1.2" stroke-linejoin="round"/><circle cx="626.5" cy="367.400" r="2" fill="#4a4a4a"/><path d="M635 297V367" fill="none" stroke="#12128c" stroke-width="1.2" stroke-linejoin="round"/><circle cx="635" cy="367.400" r="2" fill="#4a4a4a"/><path d="M643.5 297V367" fill="none" stroke="#12128c" stroke-width="1.2" stroke-linejoin="round"/><circle cx="643.5" cy="367.400" r="2" fill="#4a4a4a"/><path d="M607.500 337V352L613 358" fill="none" stroke="#12128c" stroke-width="1.35" stroke-linejoin="round"/><path d="M672 286.500L676 282.500H694L699 287.500V340L693 346" fill="none" stroke="#12128c" stroke-width="1.35" stroke-linejoin="round"/><path d="M586 297V320L580 326" fill="none" stroke="#12128c" stroke-width="1.35" stroke-linejoin="round"/><rect x="516.500" y="296" width="44.500" height="22" fill="#12128c"/><path d="M497 300H510L514 304M497 313H506L512 319H516" fill="none" stroke="#12128c" stroke-width="1.35" stroke-linejoin="round"/><path d="M484 323L478 317V296L484 290" fill="none" stroke="#12128c" stroke-width="1.35" stroke-linejoin="round"/><path d="M536 360H553.500V384H544L536 376Z" fill="#12128c" fill-opacity=".9"/><path d="M540 368a4 4 0 1 0 .1 0M548 372a3 3 0 1 0 .1 0" fill="none" stroke="#0a7a1e" stroke-width="1.300"/><path d="M546 396L556 407L566 407L584 425L614 425" fill="none" stroke="#12128c" stroke-width="1.5" stroke-linejoin="round"/><path d="M546 398.7L556 409.7L566 409.7L584 427.7L614 427.7" fill="none" stroke="#12128c" stroke-width="1.5" stroke-linejoin="round"/><path d="M546 401.4L556 412.4L566 412.4L584 430.4L614 430.4" fill="none" stroke="#12128c" stroke-width="1.5" stroke-linejoin="round"/><path d="M546 404.1L556 415.1L566 415.1L584 433.1L614 433.1" fill="none" stroke="#12128c" stroke-width="1.5" stroke-linejoin="round"/><path d="M546 406.8L556 417.8L566 417.8L584 435.8L614 435.8" fill="none" stroke="#12128c" stroke-width="1.5" stroke-linejoin="round"/><path d="M570 405L570 412L577 419" fill="none" stroke="#12128c" stroke-width="1.35" stroke-linejoin="round"/><path d="M572.7 405L572.7 412L579.7 419" fill="none" stroke="#12128c" stroke-width="1.35" stroke-linejoin="round"/><path d="M575.4 405L575.4 412L582.4 419" fill="none" stroke="#12128c" stroke-width="1.35" stroke-linejoin="round"/><path d="M579 449L593 437L614 437" fill="none" stroke="#12128c" stroke-width="1.35" stroke-linejoin="round"/><path d="M579 452L593 440L614 440" fill="none" stroke="#12128c" stroke-width="1.35" stroke-linejoin="round"/><path d="M510.5 412V420.0L501.5 430.0V449" fill="none" stroke="#12128c" stroke-width="1.25" stroke-linejoin="round"/><path d="M513.0 412V420.6L504.0 430.6V449" fill="none" stroke="#12128c" stroke-width="1.25" stroke-linejoin="round"/><path d="M515.5 412V421.2L506.5 431.2V449" fill="none" stroke="#12128c" stroke-width="1.25" stroke-linejoin="round"/><path d="M518.0 412V421.8L509.0 431.8V449" fill="none" stroke="#12128c" stroke-width="1.25" stroke-linejoin="round"/><path d="M520.5 412V422.4L511.5 432.4V449" fill="none" stroke="#12128c" stroke-width="1.25" stroke-linejoin="round"/><path d="M523.0 412V423.0L514.0 433.0V449" fill="none" stroke="#12128c" stroke-width="1.25" stroke-linejoin="round"/><path d="M525.5 412V423.6L516.5 433.6V449" fill="none" stroke="#12128c" stroke-width="1.25" stroke-linejoin="round"/><path d="M528.0 412V424.2L519.0 434.2V449" fill="none" stroke="#12128c" stroke-width="1.25" stroke-linejoin="round"/><path d="M530.5 412V424.8L521.5 434.8V449" fill="none" stroke="#12128c" stroke-width="1.25" stroke-linejoin="round"/><path d="M533.0 412V425.4L524.0 435.4V449" fill="none" stroke="#12128c" stroke-width="1.25" stroke-linejoin="round"/><path d="M500 420L500 449" fill="none" stroke="#12128c" stroke-width="1.25" stroke-linejoin="round"/><path d="M497.3 420L497.3 449" fill="none" stroke="#12128c" stroke-width="1.25" stroke-linejoin="round"/><path d="M494.6 420L494.6 449" fill="none" stroke="#12128c" stroke-width="1.25" stroke-linejoin="round"/><path d="M491.9 420L491.9 449" fill="none" stroke="#12128c" stroke-width="1.25" stroke-linejoin="round"/><path d="M484 368L492 360L492 350L500 344" fill="none" stroke="#12128c" stroke-width="1.35" stroke-linejoin="round"/><path d="M487 369L495 361L495 351L503 345" fill="none" stroke="#12128c" stroke-width="1.35" stroke-linejoin="round"/><path d="M484 386L500 386" fill="none" stroke="#12128c" stroke-width="1.1" stroke-linejoin="round"/><path d="M484 389L500 389" fill="none" stroke="#12128c" stroke-width="1.1" stroke-linejoin="round"/><path d="M484 392L500 392" fill="none" stroke="#12128c" stroke-width="1.1" stroke-linejoin="round"/><path d="M484 395L500 395" fill="none" stroke="#12128c" stroke-width="1.1" stroke-linejoin="round"/><path d="M484 398L500 398" fill="none" stroke="#12128c" stroke-width="1.1" stroke-linejoin="round"/><path d="M484 401L500 401" fill="none" stroke="#12128c" stroke-width="1.1" stroke-linejoin="round"/><path d="M484 378L492 378L499 385" fill="none" stroke="#12128c" stroke-width="1.1" stroke-linejoin="round"/><path d="M484 375L492 375L499 382" fill="none" stroke="#12128c" stroke-width="1.1" stroke-linejoin="round"/><path d="M543 380L550 380L553 383" fill="none" stroke="#12128c" stroke-width="1.1" stroke-linejoin="round"/><path d="M543 383L550 383L553 386" fill="none" stroke="#12128c" stroke-width="1.1" stroke-linejoin="round"/><path d="M543 386L550 386L553 389" fill="none" stroke="#12128c" stroke-width="1.1" stroke-linejoin="round"/><path d="M543 389L550 389L553 392" fill="none" stroke="#12128c" stroke-width="1.1" stroke-linejoin="round"/><path d="M543 392L550 392L553 395" fill="none" stroke="#12128c" stroke-width="1.1" stroke-linejoin="round"/><path d="M520 434L579 434" fill="none" stroke="#12128c" stroke-width="1.35" stroke-linejoin="round"/><path d="M520 436.7L579 436.7" fill="none" stroke="#12128c" stroke-width="1.35" stroke-linejoin="round"/><path d="M520 439.4L579 439.4" fill="none" stroke="#12128c" stroke-width="1.35" stroke-linejoin="round"/><path d="M518.500 441H531V449H518.500ZM567 441H579V449H567Z" fill="#12128c" fill-opacity=".85"/><rect x="510" y="324" width="77.400" height="11.500" fill="#0c0c58"/><rect x="534" y="359" width="39" height="7" fill="#12128c" fill-opacity=".9"/><path d="M515.5 349V366" fill="none" stroke="#12128c" stroke-width="1" stroke-linejoin="round"/><path d="M518.5 349V366" fill="none" stroke="#12128c" stroke-width="1" stroke-linejoin="round"/><path d="M526 349V366" fill="none" stroke="#12128c" stroke-width="1" stroke-linejoin="round"/><path d="M529 349V366" fill="none" stroke="#12128c" stroke-width="1" stroke-linejoin="round"/><path d="M537 349V366" fill="none" stroke="#12128c" stroke-width="1" stroke-linejoin="round"/><path d="M540 349V366" fill="none" stroke="#12128c" stroke-width="1" stroke-linejoin="round"/><path d="M548 349V366" fill="none" stroke="#12128c" stroke-width="1" stroke-linejoin="round"/><path d="M551 349V366" fill="none" stroke="#12128c" stroke-width="1" stroke-linejoin="round"/><path d="M559 349V366" fill="none" stroke="#12128c" stroke-width="1" stroke-linejoin="round"/><path d="M562 349V366" fill="none" stroke="#12128c" stroke-width="1" stroke-linejoin="round"/><path d="M570 349V366" fill="none" stroke="#12128c" stroke-width="1" stroke-linejoin="round"/><path d="M580 349V366" fill="none" stroke="#12128c" stroke-width="1" stroke-linejoin="round"/><circle cx="331.6" cy="327" r="12" fill="#666" stroke="#1a1a8c" stroke-width="1"/><circle cx="331.6" cy="327" r="6.5" fill="#2b2b2b"/><circle cx="297" cy="427" r="12" fill="#666" stroke="#1a1a8c" stroke-width="1"/><circle cx="297" cy="427" r="6.5" fill="#2b2b2b"/><circle cx="765" cy="328.2" r="11.5" fill="#666" stroke="#1a1a8c" stroke-width="1"/><circle cx="765" cy="328.2" r="6.4" fill="#2b2b2b"/><circle cx="801.5" cy="427" r="12" fill="#666" stroke="#1a1a8c" stroke-width="1"/><circle cx="801.5" cy="427" r="6.5" fill="#2b2b2b"/><circle cx="738.800" cy="301.900" r="22.400" fill="#666" stroke="#0b6b1f" stroke-width="1"/><circle cx="738.800" cy="301.900" r="11" fill="#2b2b2b"/><circle cx="374.5" cy="393.300" r="60.500" fill="none" stroke="#ffff00" stroke-width="1.200"/><rect x="353.7" y="340.6" width="43.1" height="17.8" rx="0" fill="none" stroke="#ffff00" stroke-width="1.2"/><rect x="336.2" y="349.7" width="79" height="87.2" rx="0" fill="none" stroke="#ffff00" stroke-width="1.2"/><path d="M353 427.800H398" fill="none" stroke="#ffff00" stroke-width="1.2"/><rect x="323.4" y="371.7" width="12.8" height="42.5" rx="0" fill="none" stroke="#ffff00" stroke-width="1.2"/><rect x="410.4" y="371.7" width="26" height="43.1" rx="0" fill="none" stroke="#ffff00" stroke-width="1.2"/><circle cx="364.2" cy="349.7" r="4.4" fill="#707070"/><circle cx="364.2" cy="349.7" r="2.4" fill="#2e2e2e"/><circle cx="375.3" cy="349.7" r="4.4" fill="#707070"/><circle cx="375.3" cy="349.7" r="2.4" fill="#2e2e2e"/><circle cx="386" cy="349.7" r="4.4" fill="#707070"/><circle cx="386" cy="349.7" r="2.4" fill="#2e2e2e"/><circle cx="331.6" cy="382.2" r="4.4" fill="#707070"/><circle cx="331.6" cy="382.2" r="2.4" fill="#2e2e2e"/><circle cx="331.6" cy="393" r="4.4" fill="#707070"/><circle cx="331.6" cy="393" r="2.4" fill="#2e2e2e"/><circle cx="331.6" cy="403.7" r="4.4" fill="#707070"/><circle cx="331.6" cy="403.7" r="2.4" fill="#2e2e2e"/><circle cx="411.2" cy="379.7" r="4.4" fill="#707070"/><circle cx="411.2" cy="379.7" r="2.4" fill="#2e2e2e"/><circle cx="430.7" cy="379.7" r="4.4" fill="#707070"/><circle cx="430.7" cy="379.7" r="2.4" fill="#2e2e2e"/><circle cx="411.2" cy="405.7" r="4.4" fill="#707070"/><circle cx="411.2" cy="405.7" r="2.4" fill="#2e2e2e"/><circle cx="430.7" cy="405.7" r="4.4" fill="#707070"/><circle cx="430.7" cy="405.7" r="2.4" fill="#2e2e2e"/><rect x="339.1" y="352.2" width="13.5" height="13.5" fill="#686868"/><circle cx="345.8" cy="359" r="3.2" fill="#2e2e2e"/><rect x="397.9" y="352.2" width="13.5" height="13.5" fill="#686868"/><circle cx="404.7" cy="359" r="3.2" fill="#2e2e2e"/><rect x="339.1" y="419.4" width="13.5" height="13.5" fill="#686868"/><circle cx="345.8" cy="426.1" r="3.2" fill="#2e2e2e"/><rect x="397.9" y="419.4" width="13.5" height="13.5" fill="#686868"/><circle cx="404.7" cy="426.1" r="3.2" fill="#2e2e2e"/><text x="346.5" y="348" font-size="6.5" fill="#ffff00" text-anchor="middle" font-weight="bold">VR2</text><text x="329" y="369.5" font-size="6.5" fill="#ffff00" text-anchor="middle" font-weight="bold">VR1</text><circle cx="721.5" cy="393.300" r="60.500" fill="none" stroke="#ffff00" stroke-width="1.200"/><rect x="700.7" y="340.6" width="43.1" height="17.8" rx="0" fill="none" stroke="#ffff00" stroke-width="1.2"/><rect x="683.2" y="349.7" width="79" height="87.2" rx="0" fill="none" stroke="#ffff00" stroke-width="1.2"/><path d="M700 427.800H745" fill="none" stroke="#ffff00" stroke-width="1.2"/><rect x="670.4" y="371.7" width="12.8" height="42.5" rx="0" fill="none" stroke="#ffff00" stroke-width="1.2"/><rect x="757.4" y="371.7" width="26" height="43.1" rx="0" fill="none" stroke="#ffff00" stroke-width="1.2"/><circle cx="711.2" cy="349.7" r="4.4" fill="#707070"/><circle cx="711.2" cy="349.7" r="2.4" fill="#2e2e2e"/><circle cx="722.3" cy="349.7" r="4.4" fill="#707070"/><circle cx="722.3" cy="349.7" r="2.4" fill="#2e2e2e"/><circle cx="733" cy="349.7" r="4.4" fill="#707070"/><circle cx="733" cy="349.7" r="2.4" fill="#2e2e2e"/><circle cx="678.6" cy="382.2" r="4.4" fill="#707070"/><circle cx="678.6" cy="382.2" r="2.4" fill="#2e2e2e"/><circle cx="678.6" cy="393" r="4.4" fill="#707070"/><circle cx="678.6" cy="393" r="2.4" fill="#2e2e2e"/><circle cx="678.6" cy="403.7" r="4.4" fill="#707070"/><circle cx="678.6" cy="403.7" r="2.4" fill="#2e2e2e"/><circle cx="758.2" cy="379.7" r="4.4" fill="#707070"/><circle cx="758.2" cy="379.7" r="2.4" fill="#2e2e2e"/><circle cx="777.7" cy="379.7" r="4.4" fill="#707070"/><circle cx="777.7" cy="379.7" r="2.4" fill="#2e2e2e"/><circle cx="758.2" cy="405.7" r="4.4" fill="#707070"/><circle cx="758.2" cy="405.7" r="2.4" fill="#2e2e2e"/><circle cx="777.7" cy="405.7" r="4.4" fill="#707070"/><circle cx="777.7" cy="405.7" r="2.4" fill="#2e2e2e"/><rect x="686" y="352.2" width="13.5" height="13.5" fill="#686868"/><circle cx="692.8" cy="359" r="3.2" fill="#2e2e2e"/><rect x="745" y="352.2" width="13.5" height="13.5" fill="#686868"/><circle cx="751.7" cy="359" r="3.2" fill="#2e2e2e"/><rect x="686" y="419.4" width="13.5" height="13.5" fill="#686868"/><circle cx="692.8" cy="426.1" r="3.2" fill="#2e2e2e"/><rect x="745" y="419.4" width="13.5" height="13.5" fill="#686868"/><circle cx="751.7" cy="426.1" r="3.2" fill="#2e2e2e"/><text x="693.5" y="348" font-size="6.5" fill="#ffff00" text-anchor="middle" font-weight="bold">VR2</text><text x="676" y="369.5" font-size="6.5" fill="#ffff00" text-anchor="middle" font-weight="bold">VR1</text><text x="441.5" y="396.5" font-size="6.5" fill="#ffff00" text-anchor="middle" font-weight="bold">U3</text><text x="787" y="395" font-size="6.5" fill="#ffff00" text-anchor="middle" font-weight="bold">U4</text><rect x="309.6" y="457.3" width="7.600" height="7.600" rx="1.500" fill="#1a1a70" fill-opacity=".55"/><circle cx="313.4" cy="461.1" r="3.3" fill="#505050"/><circle cx="313.4" cy="461.1" r="2" fill="#2e2e2e"/><rect x="309.6" y="476.7" width="7.600" height="7.600" rx="1.500" fill="#1a1a70" fill-opacity=".55"/><circle cx="313.4" cy="480.5" r="3.3" fill="#505050"/><circle cx="313.4" cy="480.5" r="2" fill="#2e2e2e"/><rect x="337.8" y="457.3" width="7.600" height="7.600" rx="1.500" fill="#1a1a70" fill-opacity=".55"/><circle cx="341.6" cy="461.1" r="3.3" fill="#505050"/><circle cx="341.6" cy="461.1" r="2" fill="#2e2e2e"/><rect x="337.8" y="476.7" width="7.600" height="7.600" rx="1.500" fill="#1a1a70" fill-opacity=".55"/><circle cx="341.6" cy="480.5" r="3.3" fill="#505050"/><circle cx="341.6" cy="480.5" r="2" fill="#2e2e2e"/><circle cx="327.5" cy="470.8" r="8" fill="none" stroke="#ffff00" stroke-width="1.200"/><path d="M315.5 457.9h24M315.5 483.9h24M314.5 464.8v12M340.5 464.8v12" fill="none" stroke="#ffff00" stroke-width="1.2"/><rect x="270.7" y="496.5" width="7.600" height="7.600" rx="1.500" fill="#1a1a70" fill-opacity=".55"/><circle cx="274.5" cy="500.3" r="3.3" fill="#505050"/><circle cx="274.5" cy="500.3" r="2" fill="#2e2e2e"/><rect x="270.7" y="515.9" width="7.600" height="7.600" rx="1.500" fill="#1a1a70" fill-opacity=".55"/><circle cx="274.5" cy="519.7" r="3.3" fill="#505050"/><circle cx="274.5" cy="519.7" r="2" fill="#2e2e2e"/><rect x="298.9" y="496.5" width="7.600" height="7.600" rx="1.500" fill="#1a1a70" fill-opacity=".55"/><circle cx="302.7" cy="500.3" r="3.3" fill="#505050"/><circle cx="302.7" cy="500.3" r="2" fill="#2e2e2e"/><rect x="298.9" y="515.9" width="7.600" height="7.600" rx="1.500" fill="#1a1a70" fill-opacity=".55"/><circle cx="302.7" cy="519.7" r="3.3" fill="#505050"/><circle cx="302.7" cy="519.7" r="2" fill="#2e2e2e"/><circle cx="288.6" cy="510" r="8" fill="none" stroke="#ffff00" stroke-width="1.200"/><path d="M276.6 497.1h24M276.6 523.1h24M275.6 504v12M301.6 504v12" fill="none" stroke="#ffff00" stroke-width="1.2"/><rect x="348.7" y="496.5" width="7.600" height="7.600" rx="1.500" fill="#1a1a70" fill-opacity=".55"/><circle cx="352.5" cy="500.3" r="3.3" fill="#505050"/><circle cx="352.5" cy="500.3" r="2" fill="#2e2e2e"/><rect x="348.7" y="515.9" width="7.600" height="7.600" rx="1.500" fill="#1a1a70" fill-opacity=".55"/><circle cx="352.5" cy="519.7" r="3.3" fill="#505050"/><circle cx="352.5" cy="519.7" r="2" fill="#2e2e2e"/><rect x="376.9" y="496.5" width="7.600" height="7.600" rx="1.500" fill="#1a1a70" fill-opacity=".55"/><circle cx="380.7" cy="500.3" r="3.3" fill="#505050"/><circle cx="380.7" cy="500.3" r="2" fill="#2e2e2e"/><rect x="376.9" y="515.9" width="7.600" height="7.600" rx="1.500" fill="#1a1a70" fill-opacity=".55"/><circle cx="380.7" cy="519.7" r="3.3" fill="#505050"/><circle cx="380.7" cy="519.7" r="2" fill="#2e2e2e"/><circle cx="366.6" cy="510" r="8" fill="none" stroke="#ffff00" stroke-width="1.200"/><path d="M354.6 497.1h24M354.6 523.1h24M353.6 504v12M379.6 504v12" fill="none" stroke="#ffff00" stroke-width="1.2"/><rect x="309.6" y="535.3" width="7.600" height="7.600" rx="1.500" fill="#1a1a70" fill-opacity=".55"/><circle cx="313.4" cy="539.1" r="3.3" fill="#505050"/><circle cx="313.4" cy="539.1" r="2" fill="#2e2e2e"/><rect x="309.6" y="554.7" width="7.600" height="7.600" rx="1.500" fill="#1a1a70" fill-opacity=".55"/><circle cx="313.4" cy="558.5" r="3.3" fill="#505050"/><circle cx="313.4" cy="558.5" r="2" fill="#2e2e2e"/><rect x="337.8" y="535.3" width="7.600" height="7.600" rx="1.500" fill="#1a1a70" fill-opacity=".55"/><circle cx="341.6" cy="539.1" r="3.3" fill="#505050"/><circle cx="341.6" cy="539.1" r="2" fill="#2e2e2e"/><rect x="337.8" y="554.7" width="7.600" height="7.600" rx="1.500" fill="#1a1a70" fill-opacity=".55"/><circle cx="341.6" cy="558.5" r="3.3" fill="#505050"/><circle cx="341.6" cy="558.5" r="2" fill="#2e2e2e"/><circle cx="327.5" cy="548.8" r="8" fill="none" stroke="#ffff00" stroke-width="1.200"/><path d="M315.5 535.9h24M315.5 561.9h24M314.5 542.8v12M340.5 542.8v12" fill="none" stroke="#ffff00" stroke-width="1.2"/><rect x="461.3" y="450.8" width="7.600" height="7.600" rx="1.500" fill="#1a1a70" fill-opacity=".55"/><circle cx="465.1" cy="454.6" r="3.3" fill="#505050"/><circle cx="465.1" cy="454.6" r="2" fill="#2e2e2e"/><rect x="461.3" y="470.2" width="7.600" height="7.600" rx="1.500" fill="#1a1a70" fill-opacity=".55"/><circle cx="465.1" cy="474" r="3.3" fill="#505050"/><circle cx="465.1" cy="474" r="2" fill="#2e2e2e"/><rect x="489.5" y="450.8" width="7.600" height="7.600" rx="1.500" fill="#1a1a70" fill-opacity=".55"/><circle cx="493.3" cy="454.6" r="3.3" fill="#505050"/><circle cx="493.3" cy="454.6" r="2" fill="#2e2e2e"/><rect x="489.5" y="470.2" width="7.600" height="7.600" rx="1.500" fill="#1a1a70" fill-opacity=".55"/><circle cx="493.3" cy="474" r="3.3" fill="#505050"/><circle cx="493.3" cy="474" r="2" fill="#2e2e2e"/><circle cx="479.2" cy="464.3" r="8" fill="none" stroke="#ffff00" stroke-width="1.200"/><path d="M467.2 451.4h24M467.2 477.4h24M466.2 458.3v12M492.2 458.3v12" fill="none" stroke="#ffff00" stroke-width="1.2"/><rect x="530.5" y="450.8" width="7.600" height="7.600" rx="1.500" fill="#1a1a70" fill-opacity=".55"/><circle cx="534.3" cy="454.6" r="3.3" fill="#505050"/><circle cx="534.3" cy="454.6" r="2" fill="#2e2e2e"/><rect x="530.5" y="470.2" width="7.600" height="7.600" rx="1.500" fill="#1a1a70" fill-opacity=".55"/><circle cx="534.3" cy="474" r="3.3" fill="#505050"/><circle cx="534.3" cy="474" r="2" fill="#2e2e2e"/><rect x="558.7" y="450.8" width="7.600" height="7.600" rx="1.500" fill="#1a1a70" fill-opacity=".55"/><circle cx="562.5" cy="454.6" r="3.3" fill="#505050"/><circle cx="562.5" cy="454.6" r="2" fill="#2e2e2e"/><rect x="558.7" y="470.2" width="7.600" height="7.600" rx="1.500" fill="#1a1a70" fill-opacity=".55"/><circle cx="562.5" cy="474" r="3.3" fill="#505050"/><circle cx="562.5" cy="474" r="2" fill="#2e2e2e"/><circle cx="548.4" cy="464.3" r="8" fill="none" stroke="#ffff00" stroke-width="1.200"/><path d="M536.4 451.4h24M536.4 477.4h24M535.4 458.3v12M561.4 458.3v12" fill="none" stroke="#ffff00" stroke-width="1.2"/><rect x="599.9" y="450.9" width="7.600" height="7.600" rx="1.500" fill="#1a1a70" fill-opacity=".55"/><circle cx="603.7" cy="454.7" r="3.3" fill="#505050"/><circle cx="603.7" cy="454.7" r="2" fill="#2e2e2e"/><rect x="599.9" y="470.3" width="7.600" height="7.600" rx="1.500" fill="#1a1a70" fill-opacity=".55"/><circle cx="603.7" cy="474.1" r="3.3" fill="#505050"/><circle cx="603.7" cy="474.1" r="2" fill="#2e2e2e"/><rect x="628.1" y="450.9" width="7.600" height="7.600" rx="1.500" fill="#1a1a70" fill-opacity=".55"/><circle cx="631.9" cy="454.7" r="3.3" fill="#505050"/><circle cx="631.9" cy="454.7" r="2" fill="#2e2e2e"/><rect x="628.1" y="470.3" width="7.600" height="7.600" rx="1.500" fill="#1a1a70" fill-opacity=".55"/><circle cx="631.9" cy="474.1" r="3.3" fill="#505050"/><circle cx="631.9" cy="474.1" r="2" fill="#2e2e2e"/><circle cx="617.8" cy="464.4" r="8" fill="none" stroke="#ffff00" stroke-width="1.200"/><path d="M605.8 451.5h24M605.8 477.5h24M604.8 458.4v12M630.8 458.4v12" fill="none" stroke="#ffff00" stroke-width="1.2"/><rect x="725.2" y="470.5" width="7.600" height="7.600" rx="1.500" fill="#1a1a70" fill-opacity=".55"/><circle cx="729" cy="474.3" r="3.3" fill="#505050"/><circle cx="729" cy="474.3" r="2" fill="#2e2e2e"/><rect x="725.2" y="489.9" width="7.600" height="7.600" rx="1.500" fill="#1a1a70" fill-opacity=".55"/><circle cx="729" cy="493.7" r="3.3" fill="#505050"/><circle cx="729" cy="493.7" r="2" fill="#2e2e2e"/><rect x="753.4" y="470.5" width="7.600" height="7.600" rx="1.500" fill="#1a1a70" fill-opacity=".55"/><circle cx="757.2" cy="474.3" r="3.3" fill="#505050"/><circle cx="757.2" cy="474.3" r="2" fill="#2e2e2e"/><rect x="753.4" y="489.9" width="7.600" height="7.600" rx="1.500" fill="#1a1a70" fill-opacity=".55"/><circle cx="757.2" cy="493.7" r="3.3" fill="#505050"/><circle cx="757.2" cy="493.7" r="2" fill="#2e2e2e"/><circle cx="743.1" cy="484" r="8" fill="none" stroke="#ffff00" stroke-width="1.200"/><path d="M731.1 471.1h24M731.1 497.1h24M730.1 478v12M756.1 478v12" fill="none" stroke="#ffff00" stroke-width="1.2"/><rect x="786.1" y="470.5" width="7.600" height="7.600" rx="1.500" fill="#1a1a70" fill-opacity=".55"/><circle cx="789.9" cy="474.3" r="3.3" fill="#505050"/><circle cx="789.9" cy="474.3" r="2" fill="#2e2e2e"/><rect x="786.1" y="489.9" width="7.600" height="7.600" rx="1.500" fill="#1a1a70" fill-opacity=".55"/><circle cx="789.9" cy="493.7" r="3.3" fill="#505050"/><circle cx="789.9" cy="493.7" r="2" fill="#2e2e2e"/><rect x="814.3" y="470.5" width="7.600" height="7.600" rx="1.500" fill="#1a1a70" fill-opacity=".55"/><circle cx="818.1" cy="474.3" r="3.3" fill="#505050"/><circle cx="818.1" cy="474.3" r="2" fill="#2e2e2e"/><rect x="814.3" y="489.9" width="7.600" height="7.600" rx="1.500" fill="#1a1a70" fill-opacity=".55"/><circle cx="818.1" cy="493.7" r="3.3" fill="#505050"/><circle cx="818.1" cy="493.7" r="2" fill="#2e2e2e"/><circle cx="804" cy="484" r="8" fill="none" stroke="#ffff00" stroke-width="1.200"/><path d="M792 471.1h24M792 497.1h24M791 478v12M817 478v12" fill="none" stroke="#ffff00" stroke-width="1.2"/><rect x="725.2" y="522.5" width="7.600" height="7.600" rx="1.500" fill="#1a1a70" fill-opacity=".55"/><circle cx="729" cy="526.3" r="3.3" fill="#505050"/><circle cx="729" cy="526.3" r="2" fill="#2e2e2e"/><rect x="725.2" y="541.9" width="7.600" height="7.600" rx="1.500" fill="#1a1a70" fill-opacity=".55"/><circle cx="729" cy="545.7" r="3.3" fill="#505050"/><circle cx="729" cy="545.7" r="2" fill="#2e2e2e"/><rect x="753.4" y="522.5" width="7.600" height="7.600" rx="1.500" fill="#1a1a70" fill-opacity=".55"/><circle cx="757.2" cy="526.3" r="3.3" fill="#505050"/><circle cx="757.2" cy="526.3" r="2" fill="#2e2e2e"/><rect x="753.4" y="541.9" width="7.600" height="7.600" rx="1.500" fill="#1a1a70" fill-opacity=".55"/><circle cx="757.2" cy="545.7" r="3.3" fill="#505050"/><circle cx="757.2" cy="545.7" r="2" fill="#2e2e2e"/><circle cx="743.1" cy="536" r="8" fill="none" stroke="#ffff00" stroke-width="1.200"/><path d="M731.1 523.1h24M731.1 549.1h24M730.1 530v12M756.1 530v12" fill="none" stroke="#ffff00" stroke-width="1.2"/><rect x="786.1" y="522.5" width="7.600" height="7.600" rx="1.500" fill="#1a1a70" fill-opacity=".55"/><circle cx="789.9" cy="526.3" r="3.3" fill="#505050"/><circle cx="789.9" cy="526.3" r="2" fill="#2e2e2e"/><rect x="786.1" y="541.9" width="7.600" height="7.600" rx="1.500" fill="#1a1a70" fill-opacity=".55"/><circle cx="789.9" cy="545.7" r="3.3" fill="#505050"/><circle cx="789.9" cy="545.7" r="2" fill="#2e2e2e"/><rect x="814.3" y="522.5" width="7.600" height="7.600" rx="1.500" fill="#1a1a70" fill-opacity=".55"/><circle cx="818.1" cy="526.3" r="3.3" fill="#505050"/><circle cx="818.1" cy="526.3" r="2" fill="#2e2e2e"/><rect x="814.3" y="541.9" width="7.600" height="7.600" rx="1.500" fill="#1a1a70" fill-opacity=".55"/><circle cx="818.1" cy="545.7" r="3.3" fill="#505050"/><circle cx="818.1" cy="545.7" r="2" fill="#2e2e2e"/><circle cx="804" cy="536" r="8" fill="none" stroke="#ffff00" stroke-width="1.200"/><path d="M792 523.1h24M792 549.1h24M791 530v12M817 530v12" fill="none" stroke="#ffff00" stroke-width="1.2"/><text x="329" y="455.8" font-size="14" fill="#ffff00" text-anchor="middle" font-weight="bold" textLength="16" lengthAdjust="spacingAndGlyphs">UP</text><text x="289.6" y="495" font-size="14.5" fill="#ffff00" text-anchor="middle" font-weight="bold" textLength="30.5" lengthAdjust="spacingAndGlyphs">LEFT</text><text x="367.2" y="495" font-size="14.5" fill="#ffff00" text-anchor="middle" font-weight="bold" textLength="35.5" lengthAdjust="spacingAndGlyphs">RIGHT</text><text x="328" y="534.3" font-size="14.5" fill="#ffff00" text-anchor="middle" font-weight="bold" textLength="36" lengthAdjust="spacingAndGlyphs">DOWN</text><text x="444.6" y="470" font-size="14" fill="#ffff00" text-anchor="middle" font-weight="bold" textLength="32.5" lengthAdjust="spacingAndGlyphs">WKUP</text><text x="549" y="450.3" font-size="12" fill="#ffff00" text-anchor="middle" font-weight="bold" textLength="32" lengthAdjust="spacingAndGlyphs">RESET</text><text x="653.8" y="470" font-size="14" fill="#ffff00" text-anchor="middle" font-weight="bold" textLength="37.5" lengthAdjust="spacingAndGlyphs">KEY_1</text><text x="743.7" y="468.6" font-size="21" fill="#ffff00" text-anchor="middle" font-weight="bold" textLength="28" lengthAdjust="spacingAndGlyphs">A+</text><text x="803.7" y="468.6" font-size="21" fill="#ffff00" text-anchor="middle" font-weight="bold" textLength="27" lengthAdjust="spacingAndGlyphs">B+</text><text x="743.2" y="520.7" font-size="21" fill="#ffff00" text-anchor="middle" font-weight="bold" textLength="13.5" lengthAdjust="spacingAndGlyphs">A</text><text x="804.3" y="520.7" font-size="21" fill="#ffff00" text-anchor="middle" font-weight="bold" textLength="12.7" lengthAdjust="spacingAndGlyphs">B</text><text x="327.3" y="509.5" font-size="9" fill="#e00000" text-anchor="middle" font-weight="bold">技小新</text><text x="327.3" y="516" font-size="5.5" fill="#e00000" text-anchor="middle" font-weight="bold">jixin.pro</text><rect x="753.200" y="500.200" width="41" height="19.200" rx="2.500" fill="none" stroke="#12128c" stroke-width="1.200"/><text x="773.7" y="510" font-size="9" fill="#12128c" text-anchor="middle" font-weight="bold">技小新</text><text x="773.7" y="516.5" font-size="5.5" fill="#12128c" text-anchor="middle" font-weight="bold">jixin.pro</text><rect x="353.7" y="286.2" width="30.6" height="32.6" rx="0" fill="none" stroke="#ffff00" stroke-width="1.2"/><path d="M358 296.700H384M358 308.600H384" fill="none" stroke="#ffff00" stroke-width="1.2"/><rect x="380.2" y="292.9" width="7.5" height="7.5" fill="#707070"/><circle cx="384" cy="296.7" r="2" fill="#2e2e2e"/><circle cx="384" cy="308.6" r="3.9" fill="#707070"/><circle cx="384" cy="308.6" r="2" fill="#2e2e2e"/><text x="381.2" y="284.5" font-size="6.5" fill="#ffff00" text-anchor="middle" font-weight="bold">P1</text><text x="399" y="284.5" font-size="6.5" fill="#ffff00" text-anchor="middle" font-weight="bold">SW1</text><rect x="392" y="286.2" width="38.2" height="18.4" rx="0" fill="none" stroke="#ffff00" stroke-width="1.2"/><ellipse cx="393.400" cy="295.300" rx="3" ry="5" fill="#3a3a3a"/><ellipse cx="429.300" cy="295.300" rx="3" ry="5" fill="#3a3a3a"/><circle cx="402.4" cy="295.3" r="3.9" fill="#707070"/><circle cx="402.4" cy="295.3" r="2" fill="#2e2e2e"/><circle cx="411.2" cy="295.3" r="3.9" fill="#707070"/><circle cx="411.2" cy="295.3" r="2" fill="#2e2e2e"/><circle cx="419.7" cy="295.3" r="3.9" fill="#707070"/><circle cx="419.7" cy="295.3" r="2" fill="#2e2e2e"/><path d="M403.500 274V286M405.800 274V286M408.100 274V286M410.400 274V290" stroke="#1f7a5a" stroke-width="1" fill="none"/><rect x="392" y="311.7" width="13.3" height="6.3" rx="0" fill="none" stroke="#ffff00" stroke-width="1.2"/><rect x="410.4" y="311.7" width="12.7" height="6.3" rx="0" fill="none" stroke="#ffff00" stroke-width="1.2"/><text x="399" y="325" font-size="6.5" fill="#ffff00" text-anchor="middle" font-weight="bold">R7</text><text x="417" y="325" font-size="6.5" fill="#ffff00" text-anchor="middle" font-weight="bold">R8</text><rect x="433.5" y="290.9" width="8.9" height="11.3" fill="#ff0808" stroke="#9a1030" stroke-width=".9"/><rect x="472.7" y="290.9" width="8.5" height="11.3" fill="#ff0808" stroke="#9a1030" stroke-width=".9"/><rect x="433.5" y="314.4" width="8.9" height="12.1" fill="#ff0808" stroke="#9a1030" stroke-width=".9"/><rect x="472.7" y="314.4" width="8.5" height="12.1" fill="#ff0808" stroke="#9a1030" stroke-width=".9"/><rect x="442.800" y="289" width="29.500" height="36" fill="none" stroke="#c01028" stroke-width=".7" stroke-opacity=".6"/><path d="M440.400 291V286.900H473.700V291M443.200 324.600H448.800M466.200 324.600H471.900" fill="none" stroke="#ffff00" stroke-width="1.2"/><path d="M440.400 303V314M473.900 303V314" stroke="#ff9a00" stroke-width="1.200" fill="none"/><text x="478.8" y="290.3" font-size="6.5" fill="#ffff00" text-anchor="middle" font-weight="bold">P2</text><circle cx="452.1" cy="294.8" r="1.150" fill="#4a4444"/><circle cx="452.1" cy="297.9" r="1.150" fill="#4a4444"/><circle cx="452.1" cy="300.9" r="1.150" fill="#4a4444"/><circle cx="452.1" cy="304" r="1.150" fill="#4a4444"/><circle cx="455.2" cy="294.8" r="1.150" fill="#4a4444"/><circle cx="455.2" cy="297.9" r="1.150" fill="#4a4444"/><circle cx="455.2" cy="300.9" r="1.150" fill="#4a4444"/><circle cx="455.2" cy="304" r="1.150" fill="#4a4444"/><circle cx="458.3" cy="294.8" r="1.150" fill="#4a4444"/><circle cx="458.3" cy="297.9" r="1.150" fill="#4a4444"/><circle cx="458.3" cy="300.9" r="1.150" fill="#4a4444"/><circle cx="458.3" cy="304" r="1.150" fill="#4a4444"/><circle cx="461.5" cy="294.8" r="1.150" fill="#4a4444"/><circle cx="461.5" cy="297.9" r="1.150" fill="#4a4444"/><circle cx="461.5" cy="300.9" r="1.150" fill="#4a4444"/><circle cx="461.5" cy="304" r="1.150" fill="#4a4444"/><circle cx="464.6" cy="294.8" r="1.150" fill="#4a4444"/><circle cx="464.6" cy="297.9" r="1.150" fill="#4a4444"/><circle cx="464.6" cy="300.9" r="1.150" fill="#4a4444"/><circle cx="464.6" cy="304" r="1.150" fill="#4a4444"/><circle cx="467.7" cy="294.8" r="1.150" fill="#4a4444"/><circle cx="467.7" cy="297.9" r="1.150" fill="#4a4444"/><circle cx="467.7" cy="300.9" r="1.150" fill="#4a4444"/><circle cx="467.7" cy="304" r="1.150" fill="#4a4444"/><circle cx="447.900" cy="309.700" r="2.500" fill="#2a2a2a"/><circle cx="467" cy="309.700" r="2.500" fill="#2a2a2a"/><rect x="449.300" y="314.400" width="16.500" height="14.100" fill="#12128c"/><rect x="450.2" y="315" width="2.100" height="12.500" fill="#ff0808"/><rect x="453.5" y="315" width="2.100" height="12.500" fill="#ff0808"/><rect x="456.8" y="315" width="2.100" height="12.500" fill="#ff0808"/><rect x="460.1" y="315" width="2.100" height="12.500" fill="#ff0808"/><rect x="463.4" y="315" width="2.100" height="12.500" fill="#ff0808"/><rect x="487.2" y="289.3" width="7.3" height="6.5" rx="2.2" fill="none" stroke="#ffff00" stroke-width="1.2"/><rect x="487.2" y="296.5" width="7.3" height="6.5" rx="2.2" fill="none" stroke="#ffff00" stroke-width="1.2"/><rect x="487.2" y="307.5" width="7.3" height="6.5" rx="2.2" fill="none" stroke="#ffff00" stroke-width="1.2"/><rect x="487.2" y="314.7" width="7.3" height="6.5" rx="2.2" fill="none" stroke="#ffff00" stroke-width="1.2"/><text transform="translate(486 299) rotate(-90)" font-size="5.5" fill="#ffff00" text-anchor="middle" font-weight="bold">C1</text><text transform="translate(486 314.5) rotate(-90)" font-size="5.5" fill="#ffff00" text-anchor="middle" font-weight="bold">C2</text><text transform="translate(507 296.5) rotate(-90)" font-size="6.5" fill="#ffff00" text-anchor="start" font-weight="bold">U1</text><rect x="498.6" y="296.200" width="2.400" height="4" fill="#b01030"/><rect x="498.6" y="306.700" width="2.400" height="4.300" fill="#b01030"/><circle cx="499.8" cy="303.800" r="1.100" fill="#3a3a3a"/><rect x="502.7" y="296.200" width="2.400" height="4" fill="#b01030"/><rect x="502.7" y="306.700" width="2.400" height="4.300" fill="#b01030"/><circle cx="503.9" cy="303.800" r="1.100" fill="#3a3a3a"/><rect x="506.8" y="296.200" width="2.400" height="4" fill="#b01030"/><rect x="506.8" y="306.700" width="2.400" height="4.300" fill="#b01030"/><circle cx="508" cy="303.800" r="1.100" fill="#3a3a3a"/><path d="M498.200 300.600V306.700M510.300 300.600V306.700" fill="none" stroke="#ffff00" stroke-width="1.2"/><rect x="516.300" y="193.500" width="65.700" height="125.500" fill="none" stroke="#1f5f4a" stroke-width="1.400"/><path d="M518 259.200H561.400V318H518M529 259.200V318M539.700 259.200V318M550.700 259.200V318M518 284.800H561.400" stroke="#1f5f4a" stroke-width="1.300" fill="none"/><rect x="517" y="284.500" width="43.500" height="11" fill="#c8a000" fill-opacity=".3"/><text transform="translate(526.5 296) rotate(-90)" font-size="7" fill="#d8c81e" text-anchor="start" font-weight="bold">GND</text><text transform="translate(537.4 296) rotate(-90)" font-size="7" fill="#d8c81e" text-anchor="start" font-weight="bold">CE</text><text transform="translate(548.3 296) rotate(-90)" font-size="7" fill="#d8c81e" text-anchor="start" font-weight="bold">SCK</text><text transform="translate(559.2 296) rotate(-90)" font-size="7" fill="#d8c81e" text-anchor="start" font-weight="bold">MISO</text><text transform="translate(526.5 283) rotate(-90)" font-size="8" fill="#1f6b55" text-anchor="start" font-weight="bold">VCC</text><text transform="translate(537.4 283) rotate(-90)" font-size="8" fill="#1f6b55" text-anchor="start" font-weight="bold">CSN</text><text transform="translate(548.3 283) rotate(-90)" font-size="8" fill="#1f6b55" text-anchor="start" font-weight="bold">MOSI</text><text transform="translate(559.2 283) rotate(-90)" font-size="8" fill="#1f6b55" text-anchor="start" font-weight="bold">IRQ</text><text transform="translate(541 254) rotate(-90)" font-size="8" fill="#1f6b55" text-anchor="start" font-weight="bold" textLength="53" lengthAdjust="spacingAndGlyphs">Wireless-2.4G</text><text transform="translate(554.5 256) rotate(-90)" font-size="8" fill="#1f6b55" text-anchor="start" font-weight="bold" textLength="59" lengthAdjust="spacingAndGlyphs">NRF24L01P V1.0</text><rect x="519.300" y="238.300" width="7.700" height="17.700" fill="none" stroke="#1f6b55" stroke-width="1.200"/><rect x="521" y="240.500" width="4.300" height="13" fill="#1f6b55" fill-opacity=".6"/><circle cx="522.5" cy="301.6" r="4.3" fill="#7a7a86"/><circle cx="522.5" cy="301.6" r="2.2" fill="#2e2e2e"/><rect x="518.2" y="308.1" width="8.6" height="8.6" fill="#7a7a86"/><circle cx="522.5" cy="312.4" r="2.2" fill="#2e2e2e"/><circle cx="533.4" cy="301.6" r="4.3" fill="#7a7a86"/><circle cx="533.4" cy="301.6" r="2.2" fill="#2e2e2e"/><circle cx="533.4" cy="312.4" r="4.3" fill="#7a7a86"/><circle cx="533.4" cy="312.4" r="2.2" fill="#2e2e2e"/><circle cx="544.5" cy="301.6" r="4.3" fill="#7a7a86"/><circle cx="544.5" cy="301.6" r="2.2" fill="#2e2e2e"/><circle cx="544.5" cy="312.4" r="4.3" fill="#7a7a86"/><circle cx="544.5" cy="312.4" r="2.2" fill="#2e2e2e"/><circle cx="555.3" cy="301.6" r="4.3" fill="#7a7a86"/><circle cx="555.3" cy="301.6" r="2.2" fill="#2e2e2e"/><circle cx="555.3" cy="312.4" r="4.3" fill="#7a7a86"/><circle cx="555.3" cy="312.4" r="2.2" fill="#2e2e2e"/><circle cx="555.3" cy="301.6" r="4.3" fill="#7a7a86"/><circle cx="555.3" cy="301.6" r="2.2" fill="#2e2e2e"/><circle cx="555.3" cy="312.4" r="4.3" fill="#7a7a86"/><circle cx="555.3" cy="312.4" r="2.2" fill="#2e2e2e"/><text x="566" y="291.5" font-size="6.5" fill="#ffff00" text-anchor="middle" font-weight="bold">M1</text><text x="580" y="291.5" font-size="6.5" fill="#ffff00" text-anchor="middle" font-weight="bold">P4</text><circle cx="494.3" cy="333.9" r="8.600" fill="none" stroke="#1f7a3a" stroke-width="1"/><circle cx="494.3" cy="333.9" r="6.200" fill="none" stroke="#ffff00" stroke-width="3.600"/><circle cx="494.3" cy="333.9" r="4.400" fill="#2b2b2b"/><circle cx="602.3" cy="333.9" r="8.600" fill="none" stroke="#1f7a3a" stroke-width="1"/><circle cx="602.3" cy="333.9" r="6.200" fill="none" stroke="#ffff00" stroke-width="3.600"/><circle cx="602.3" cy="333.9" r="4.400" fill="#2b2b2b"/><circle cx="494.1" cy="438" r="8.600" fill="none" stroke="#1f7a3a" stroke-width="1"/><circle cx="494.1" cy="438" r="6.200" fill="none" stroke="#ffff00" stroke-width="3.600"/><circle cx="494.1" cy="438" r="4.400" fill="#2b2b2b"/><circle cx="602.7" cy="438" r="8.600" fill="none" stroke="#1f7a3a" stroke-width="1"/><circle cx="602.7" cy="438" r="6.200" fill="none" stroke="#ffff00" stroke-width="3.600"/><circle cx="602.7" cy="438" r="4.400" fill="#2b2b2b"/><circle cx="572.2" cy="310.3" r="8.600" fill="none" stroke="#1f7a3a" stroke-width="1"/><circle cx="572.2" cy="310.3" r="6.200" fill="none" stroke="#ffff00" stroke-width="3.600"/><circle cx="572.2" cy="310.3" r="4.400" fill="#2b2b2b"/><path d="M483.500 323.500H597A17 17 0 0 1 614 340.500V448.700H578.500V440.300H518.600V448.700H493A9.500 9.500 0 0 1 483.500 439.200Z" fill="none" stroke="#ffff00" stroke-width="1.2"/><rect x="509.6" y="323.3" width="77.8" height="34.6" rx="0" fill="none" stroke="#ffff00" stroke-width="1.2"/><path d="M509.600 335.500H587.400" fill="none" stroke="#ffff00" stroke-width="1.2"/><path d="M509.600 349H587.400" stroke="#5a9a28" stroke-width="1.200" fill="none"/><path d="M520.7 335.500V357.900" fill="none" stroke="#ffff00" stroke-width="1.2"/><path d="M531.8 335.500V357.900" fill="none" stroke="#ffff00" stroke-width="1.2"/><path d="M542.9 335.500V357.900" fill="none" stroke="#ffff00" stroke-width="1.2"/><path d="M554 335.500V357.900" fill="none" stroke="#ffff00" stroke-width="1.2"/><path d="M565.1 335.500V357.900" fill="none" stroke="#ffff00" stroke-width="1.2"/><path d="M576.2 335.500V357.900" fill="none" stroke="#ffff00" stroke-width="1.2"/><circle cx="515.4" cy="329.8" r="4.1" fill="#74747e"/><circle cx="515.4" cy="329.8" r="2.2" fill="#2e2e2e"/><circle cx="526.4" cy="329.8" r="4.1" fill="#74747e"/><circle cx="526.4" cy="329.8" r="2.2" fill="#2e2e2e"/><circle cx="537.4" cy="329.8" r="4.1" fill="#74747e"/><circle cx="537.4" cy="329.8" r="2.2" fill="#2e2e2e"/><circle cx="548.5" cy="329.8" r="4.1" fill="#74747e"/><circle cx="548.5" cy="329.8" r="2.2" fill="#2e2e2e"/><circle cx="559.5" cy="329.8" r="4.1" fill="#74747e"/><circle cx="559.5" cy="329.8" r="2.2" fill="#2e2e2e"/><circle cx="570.5" cy="329.8" r="4.1" fill="#74747e"/><circle cx="570.5" cy="329.8" r="2.2" fill="#2e2e2e"/><circle cx="581.5" cy="329.8" r="4.1" fill="#74747e"/><circle cx="581.5" cy="329.8" r="2.2" fill="#2e2e2e"/><path d="M520.700 323.500V349M531.800 323.500V349M542.900 323.500V349M554 323.500V349M565.100 323.500V349M576.200 323.500V349" stroke="#3f8a2a" stroke-width="1.200" fill="none"/><text transform="translate(517.9 348) rotate(-90)" font-size="6.5" fill="#ffff00" text-anchor="start" font-weight="bold" textLength="11" lengthAdjust="spacingAndGlyphs">GND</text><text transform="translate(529 348) rotate(-90)" font-size="6.5" fill="#ffff00" text-anchor="start" font-weight="bold" textLength="11" lengthAdjust="spacingAndGlyphs">VCC</text><text transform="translate(540.1 348) rotate(-90)" font-size="6.5" fill="#ffff00" text-anchor="start" font-weight="bold" textLength="11" lengthAdjust="spacingAndGlyphs">D0</text><text transform="translate(551.2 348) rotate(-90)" font-size="6.5" fill="#ffff00" text-anchor="start" font-weight="bold" textLength="11" lengthAdjust="spacingAndGlyphs">D1</text><text transform="translate(562.3 348) rotate(-90)" font-size="6.5" fill="#ffff00" text-anchor="start" font-weight="bold" textLength="11" lengthAdjust="spacingAndGlyphs">RES</text><text transform="translate(573.4 348) rotate(-90)" font-size="6.5" fill="#ffff00" text-anchor="start" font-weight="bold" textLength="11" lengthAdjust="spacingAndGlyphs">DC</text><text transform="translate(584.5 348) rotate(-90)" font-size="6.5" fill="#ffff00" text-anchor="start" font-weight="bold" textLength="11" lengthAdjust="spacingAndGlyphs">CS</text><rect x="585.7" y="286" width="108.9" height="51.3" rx="0" fill="none" stroke="#ffff00" stroke-width="1.2"/><path d="M585.700 297.100H694.600" fill="none" stroke="#ffff00" stroke-width="1.2"/><path d="M596.6 286V337.300" fill="none" stroke="#ffff00" stroke-width="1.2"/><path d="M607.5 286V337.300" fill="none" stroke="#ffff00" stroke-width="1.2"/><path d="M618.4 286V337.300" fill="none" stroke="#ffff00" stroke-width="1.2"/><path d="M629.3 286V337.300" fill="none" stroke="#ffff00" stroke-width="1.2"/><path d="M640.2 286V337.300" fill="none" stroke="#ffff00" stroke-width="1.2"/><path d="M651 286V337.300" fill="none" stroke="#ffff00" stroke-width="1.2"/><path d="M661.9 286V337.300" fill="none" stroke="#ffff00" stroke-width="1.2"/><path d="M672.8 286V337.300" fill="none" stroke="#ffff00" stroke-width="1.2"/><path d="M683.7 286V337.300" fill="none" stroke="#ffff00" stroke-width="1.2"/><rect x="587.3" y="288.3" width="7.6" height="7.6" fill="#707070"/><circle cx="591.1" cy="292.1" r="2" fill="#2e2e2e"/><text transform="translate(595 299.5) rotate(-90)" font-size="10.5" fill="#ffff00" text-anchor="end" font-weight="bold" textLength="24" lengthAdjust="spacingAndGlyphs">GND</text><circle cx="602" cy="292.1" r="3.9" fill="#707070"/><circle cx="602" cy="292.1" r="2" fill="#2e2e2e"/><text transform="translate(605.9 299.5) rotate(-90)" font-size="10.5" fill="#ffff00" text-anchor="end" font-weight="bold" textLength="20" lengthAdjust="spacingAndGlyphs">3V3</text><circle cx="612.9" cy="292.1" r="3.9" fill="#707070"/><circle cx="612.9" cy="292.1" r="2" fill="#2e2e2e"/><text transform="translate(616.8 299.5) rotate(-90)" font-size="10.5" fill="#ffff00" text-anchor="end" font-weight="bold" textLength="12.8" lengthAdjust="spacingAndGlyphs">TX</text><circle cx="623.8" cy="292.1" r="3.9" fill="#707070"/><circle cx="623.8" cy="292.1" r="2" fill="#2e2e2e"/><text transform="translate(627.7 299.5) rotate(-90)" font-size="10.5" fill="#ffff00" text-anchor="end" font-weight="bold" textLength="13.2" lengthAdjust="spacingAndGlyphs">RX</text><circle cx="634.7" cy="292.1" r="3.9" fill="#707070"/><circle cx="634.7" cy="292.1" r="2" fill="#2e2e2e"/><text transform="translate(638.6 299.5) rotate(-90)" font-size="10.5" fill="#ffff00" text-anchor="end" font-weight="bold" textLength="23.6" lengthAdjust="spacingAndGlyphs">PA13</text><circle cx="645.6" cy="292.1" r="3.9" fill="#707070"/><circle cx="645.6" cy="292.1" r="2" fill="#2e2e2e"/><text transform="translate(649.5 299.5) rotate(-90)" font-size="10.5" fill="#ffff00" text-anchor="end" font-weight="bold" textLength="23.6" lengthAdjust="spacingAndGlyphs">PA14</text><circle cx="656.4" cy="292.1" r="3.9" fill="#707070"/><circle cx="656.4" cy="292.1" r="2" fill="#2e2e2e"/><text transform="translate(660.3 299.5) rotate(-90)" font-size="10.5" fill="#ffff00" text-anchor="end" font-weight="bold" textLength="24" lengthAdjust="spacingAndGlyphs">GND</text><circle cx="667.3" cy="292.1" r="3.9" fill="#707070"/><circle cx="667.3" cy="292.1" r="2" fill="#2e2e2e"/><text transform="translate(671.2 299.5) rotate(-90)" font-size="10.5" fill="#ffff00" text-anchor="end" font-weight="bold" textLength="20" lengthAdjust="spacingAndGlyphs">3V3</text><circle cx="678.2" cy="292.1" r="3.9" fill="#707070"/><circle cx="678.2" cy="292.1" r="2" fill="#2e2e2e"/><text transform="translate(682.1 299.5) rotate(-90)" font-size="10.5" fill="#ffff00" text-anchor="end" font-weight="bold" textLength="30.4" lengthAdjust="spacingAndGlyphs">SWDIO</text><circle cx="689.1" cy="292.1" r="3.9" fill="#707070"/><circle cx="689.1" cy="292.1" r="2" fill="#2e2e2e"/><text transform="translate(693 299.5) rotate(-90)" font-size="10.5" fill="#ffff00" text-anchor="end" font-weight="bold" textLength="33.7" lengthAdjust="spacingAndGlyphs">SWCLK</text><rect x="504.200" y="373.700" width="34.300" height="34" fill="none" stroke="#8a0a1e" stroke-width="9" stroke-dasharray="1.300 1.200"/><rect x="509.3" y="378.3" width="24.5" height="24.8" rx="0" fill="none" stroke="#ffff00" stroke-width="1.2"/><text x="521" y="418.3" font-size="6.5" fill="#ffff00" text-anchor="middle" font-weight="bold">U2</text><circle cx="518.2" cy="382.6" r="1.900" fill="#3a4a3a"/><circle cx="518.2" cy="387.5" r="1.900" fill="#3a4a3a"/><circle cx="518.2" cy="393" r="1.900" fill="#3a4a3a"/><circle cx="518.2" cy="398.5" r="1.900" fill="#3a4a3a"/><circle cx="526.7" cy="380" r="1.900" fill="#3a4a3a"/><circle cx="527" cy="395" r=".9" fill="#4a3a3a"/><circle cx="527" cy="397.7" r=".9" fill="#4a3a3a"/><circle cx="527" cy="400.4" r=".9" fill="#4a3a3a"/><circle cx="529.5" cy="395" r=".9" fill="#4a3a3a"/><circle cx="529.5" cy="397.7" r=".9" fill="#4a3a3a"/><circle cx="529.5" cy="400.4" r=".9" fill="#4a3a3a"/><circle cx="532" cy="395" r=".9" fill="#4a3a3a"/><circle cx="532" cy="397.7" r=".9" fill="#4a3a3a"/><circle cx="532" cy="400.4" r=".9" fill="#4a3a3a"/><rect x="499.8" y="363.4" width="6.8" height="5.7" rx="1.2" fill="none" stroke="#ffff00" stroke-width="1.2"/><rect x="499.8" y="370.5" width="6.8" height="5.7" rx="1.2" fill="none" stroke="#ffff00" stroke-width="1.2"/><text x="512.5" y="368.6" font-size="6.5" fill="#ffff00" text-anchor="middle" font-weight="bold">C4</text><text x="548.3" y="368.6" font-size="6.5" fill="#ffff00" text-anchor="middle" font-weight="bold">R5</text><rect x="554.3" y="362.7" width="5.7" height="6.4" rx="1.2" fill="none" stroke="#ffff00" stroke-width="1.2"/><rect x="561.8" y="362.7" width="5.7" height="6.4" rx="1.2" fill="none" stroke="#ffff00" stroke-width="1.2"/><rect x="554.3" y="372.6" width="5.7" height="6.4" rx="1.2" fill="none" stroke="#ffff00" stroke-width="1.2"/><rect x="561.8" y="372.6" width="5.7" height="6.4" rx="1.2" fill="none" stroke="#ffff00" stroke-width="1.2"/><rect x="554.3" y="380.4" width="5.7" height="6.4" rx="1.2" fill="none" stroke="#ffff00" stroke-width="1.2"/><rect x="561.8" y="380.4" width="5.7" height="6.4" rx="1.2" fill="none" stroke="#ffff00" stroke-width="1.2"/><rect x="554.3" y="388.2" width="5.7" height="7.1" rx="1.2" fill="none" stroke="#ffff00" stroke-width="1.2"/><rect x="561.8" y="388.2" width="5.7" height="7.1" rx="1.2" fill="none" stroke="#ffff00" stroke-width="1.2"/><rect x="554.3" y="397.4" width="5.7" height="7.1" rx="1.2" fill="none" stroke="#ffff00" stroke-width="1.2"/><rect x="561.8" y="397.4" width="5.7" height="7.1" rx="1.2" fill="none" stroke="#ffff00" stroke-width="1.2"/><text x="573" y="404.8" font-size="6.5" fill="#ffff00" text-anchor="middle" font-weight="bold">R4</text><text transform="translate(569.5 379) rotate(90)" font-size="5.2" fill="#ffff00" text-anchor="start" font-weight="bold" textLength="15" lengthAdjust="spacingAndGlyphs">C6R6C5</text><rect x="493.4" y="405.9" width="6.4" height="7.1" rx="2" fill="none" stroke="#ffff00" stroke-width="1.2"/><rect x="501" y="405.9" width="5.9" height="7.1" rx="2" fill="none" stroke="#ffff00" stroke-width="1.2"/><text x="499.8" y="418.5" font-size="5.5" fill="#ffff00" text-anchor="middle" font-weight="bold">C1</text><rect x="536.6" y="407.3" width="6.4" height="6.1" rx="2" fill="none" stroke="#ffff00" stroke-width="1.2"/><rect x="536.6" y="414.4" width="6.4" height="6" rx="2" fill="none" stroke="#ffff00" stroke-width="1.2"/><text transform="translate(545 409) rotate(70)" font-size="5" fill="#ffff00" text-anchor="start" font-weight="bold">C2</text><rect x="541.6" y="424.3" width="6.1" height="7.5" rx="1.2" fill="none" stroke="#ffff00" stroke-width="1.2"/><rect x="549" y="424.3" width="6" height="7.5" rx="1.2" fill="none" stroke="#ffff00" stroke-width="1.2"/><rect x="558.9" y="424.3" width="6.1" height="7.5" rx="1.2" fill="none" stroke="#ffff00" stroke-width="1.2"/><rect x="566" y="424.3" width="6" height="7.5" rx="1.2" fill="none" stroke="#ffff00" stroke-width="1.2"/><text x="530.6" y="430.3" font-size="5.5" fill="#ffff00" text-anchor="middle" font-weight="bold" textLength="11.5" lengthAdjust="spacingAndGlyphs">LED1</text><text x="578" y="430" font-size="5.5" fill="#ffff00" text-anchor="middle" font-weight="bold">R1</text><rect x="507.5" y="450.6" width="6.3" height="7.2" rx="0" fill="none" stroke="#ffff00" stroke-width="1.2"/><rect x="514.5" y="450.6" width="6.3" height="7.2" rx="0" fill="none" stroke="#ffff00" stroke-width="1.2"/><text x="501.6" y="456.5" font-size="6" fill="#ffff00" text-anchor="middle" font-weight="bold">R2</text><rect x="507.5" y="460.7" width="6.5" height="6.3" rx="1.5" fill="none" stroke="#ffff00" stroke-width="1.2"/><rect x="514.7" y="460.7" width="6.8" height="6.3" rx="1.5" fill="none" stroke="#ffff00" stroke-width="1.2"/><text x="514.2" y="474.5" font-size="6" fill="#ffff00" text-anchor="middle" font-weight="bold">LED2</text><rect x="576.7" y="450.6" width="6.3" height="7.2" rx="0" fill="none" stroke="#ffff00" stroke-width="1.2"/><rect x="583.7" y="450.6" width="6.1" height="7.2" rx="0" fill="none" stroke="#ffff00" stroke-width="1.2"/><text x="595.2" y="456.5" font-size="6" fill="#ffff00" text-anchor="middle" font-weight="bold">R3</text><rect x="576.7" y="460.7" width="6.6" height="6.3" rx="1.5" fill="none" stroke="#ffff00" stroke-width="1.2"/><rect x="584" y="460.7" width="6.5" height="6.3" rx="1.5" fill="none" stroke="#ffff00" stroke-width="1.2"/><text x="583.4" y="474.5" font-size="6" fill="#ffff00" text-anchor="middle" font-weight="bold">LED3</text><path d="M582 362.700H578.400V412.300H582M595 363.400H598.600V411.900H595" fill="none" stroke="#ffff00" stroke-width="1.2"/><rect x="584" y="355" width="9.200" height="23.3" fill="#ff0000" stroke="#1a1a8c" stroke-width=".9"/><rect x="584" y="395.3" width="9.200" height="24.7" fill="#ff0000" stroke="#1a1a8c" stroke-width=".9"/><rect x="601" y="363.9" width="5.7" height="5.9" rx="1.2" fill="none" stroke="#ffff00" stroke-width="1.2"/><rect x="601" y="371" width="5.7" height="5.9" rx="1.2" fill="none" stroke="#ffff00" stroke-width="1.2"/><rect x="601" y="399.8" width="5.7" height="6.1" rx="1.2" fill="none" stroke="#ffff00" stroke-width="1.2"/><rect x="601" y="406.6" width="5.7" height="5.7" rx="1.2" fill="none" stroke="#ffff00" stroke-width="1.2"/><text transform="translate(602.2 377.6) rotate(90)" font-size="6" fill="#ffff00" text-anchor="start" font-weight="bold" textLength="20.5" lengthAdjust="spacingAndGlyphs">C7Y1C8</text><circle cx="616.7" cy="397.2" r="1.200" fill="#5a3a3a"/><circle cx="616.7" cy="401.6" r="1.200" fill="#5a3a3a"/><circle cx="616.7" cy="406.1" r="1.200" fill="#5a3a3a"/><circle cx="616.7" cy="410.6" r="1.200" fill="#5a3a3a"/><circle cx="616.7" cy="415" r="1.200" fill="#5a3a3a"/><circle cx="622.4" cy="397.2" r="1.200" fill="#5a3a3a"/><circle cx="622.4" cy="401.6" r="1.200" fill="#5a3a3a"/><circle cx="622.4" cy="406.1" r="1.200" fill="#5a3a3a"/><circle cx="622.4" cy="410.6" r="1.200" fill="#5a3a3a"/><circle cx="622.4" cy="415" r="1.200" fill="#5a3a3a"/><circle cx="628" cy="397.2" r="1.200" fill="#5a3a3a"/><circle cx="628" cy="401.6" r="1.200" fill="#5a3a3a"/><circle cx="628" cy="406.1" r="1.200" fill="#5a3a3a"/><circle cx="628" cy="410.6" r="1.200" fill="#5a3a3a"/><circle cx="628" cy="415" r="1.200" fill="#5a3a3a"/><circle cx="472" cy="358" r="1.600" fill="#5a3a5a"/><circle cx="472" cy="361.4" r="1.600" fill="#5a3a5a"/><circle cx="472" cy="364.8" r="1.600" fill="#5a3a5a"/><circle cx="472" cy="368.2" r="1.600" fill="#5a3a5a"/></g></svg></div><div class="abs" style="left:1045px;top:69px;width:6px;height:673px;background:#e8e8e8 repeating-linear-gradient(180deg,rgba(255,255,255,0) 0 2px,rgba(120,120,120,.25) 2px 3px)"></div><div class="abs" style="left:1045px;top:381px;width:6px;height:49px;border:1px solid #777;background:#fff"></div><div class="abs" style="left:188px;top:381px;width:6px;height:49px;border:1px solid #777;background:#fff"></div><svg class="abs" style="left:188px;top:400px" width="6" height="12" viewBox="0 0 6 12"><path d="M5 2.500v7l-4-3.500z" fill="#555"/></svg><svg class="abs" style="left:1045px;top:400px" width="6" height="12" viewBox="0 0 6 12"><path d="M1 2.500v7l4-3.500z" fill="#555"/></svg><div class="fl" style="left:500px;top:73px;width:290px;height:90px;background:#fafafa"><div class="abs" style="left:0;top:0;width:290px;height:23px;background:#efefef;border-bottom:1px solid #dcdcdc;font-size:12px;line-height:23px;padding-left:5px;color:#222">PCB工具</div><div class="abs" style="left:273px;top:10px;width:11px;height:1px;background:#555"></div><svg class="abs" style="left:0;top:0" width="290" height="90" viewBox="500 73 290 90" fill="none" stroke="#333" stroke-width="1.300" stroke-linecap="round" stroke-linejoin="round"><circle cx="511.500" cy="110.500" r="1.700"/><circle cx="526" cy="121.500" r="1.700"/><path d="M513.200 110.500h4.800v11h6.300"/><circle cx="547.200" cy="116" r="5.300" stroke-width="3.400"/><circle cx="571" cy="112.500" r="3.600" stroke-width="2"/><path d="M571 116.300v7.500M574.800 112h8" stroke-width="1.800"/><path d="M596.500 113v-3.500h12v3.500M602.500 109.500v13M599.500 122.500h6M604 110v12" stroke-width="1.200"/><path d="M631 123.500a7.500 7.500 0 1 1 7.500-7.500"/><path d="M638.500 116h-7.500v7.500" stroke-dasharray="1.600 1.400" stroke-width="1.100"/><path d="M667 115.500a8 8 0 1 0-7.500 8"/><path d="M659.500 115.500v8" stroke-dasharray="1.500 1.500"/><path d="M658 121.500l2 2-2 2" stroke-width="1"/><circle cx="687" cy="116" r="8"/><path d="M711 117.500l-2.300-2.800c-.9-1-2.300.1-1.600 1.200l3.700 6.500c1 1.700 2.500 2.500 4.500 2.500h2.200c2.600 0 4-1.800 4-4.300v-7c0-1.400-2-1.400-2 0v3-5.200c0-1.400-2.100-1.400-2.100 0v4.500-6c0-1.400-2.100-1.400-2.100 0v6-4.800c0-1.400-2.200-1.400-2.200 0z" stroke-width="1.100"/><circle cx="743" cy="116" r="5.500"/><path d="M735 108l4 4M751 108l-4 4M735 124l4-4M751 124l-4-4"/><rect x="762.500" y="109" width="17" height="14.500" rx="1"/><path d="M762.500 119.500l5.500-4 4 3 3-2 4.500 3.500"/><circle cx="775" cy="112.800" r="1" fill="#333"/><path d="M512 136.500v14M512 136.500h14"/><circle cx="512" cy="136.500" r="1.500" fill="#333"/><path d="M524.500 134.800l2.500 1.700-2.500 1.700M510.300 148.500l1.700 2.500 1.700-2.500" fill="#333" stroke-width=".8"/><path d="M559 137l-19.500 13h17.500M547 145a6 6 0 0 1 2.500 5" stroke-width="1.200"/><circle cx="568.500" cy="136.500" r="1.800"/><circle cx="582.500" cy="150.500" r="1.800"/><path d="M570 138l11 11" stroke-dasharray="2.500 2"/><path d="M594 150.500v-8h6v-6h13v8h-5.500v6z" stroke-dasharray="2.500 1.800"/><path d="M621.500 150.500v-8.500h6.500v-5.500h12.500v14z" stroke-width="1.400"/><path d="M651.500 150l13-13M651.500 150v-3.500M651.500 150h3.500M664.500 137v3.500M664.500 137h-3.500M654 140l8 8" stroke-width="1.200"/><path d="M655.500 141.500l5 5" stroke="#fafafa" stroke-width="2.500"/><rect x="679.500" y="136.500" width="14.500" height="14"/><rect x="710" y="139" width="6.500" height="6"/><rect x="713.500" y="142.500" width="6.500" height="6"/><rect x="707" y="136" width="2.200" height="2.200"/><rect x="721" y="136" width="2.200" height="2.200"/><rect x="707" y="149.500" width="2.200" height="2.200"/><rect x="721" y="149.500" width="2.200" height="2.200"/><rect x="734.500" y="136.500" width="18.500" height="14.500"/><path d="M743 145h10M743 148h10M743 145v6M748 145v6" stroke-width="1.100"/></svg></div><div class="fl" style="left:795px;top:75px;width:243px;height:372px"><div class="abs" style="left:0;top:0;width:243px;height:24px;background:#efefef;font-size:12px;line-height:24px;padding-left:5px;color:#222">层与元素</div><svg class="abs" style="left:190px;top:4px" width="50" height="16" viewBox="0 0 50 16" fill="none"><path d="M10.500 1.500l4 4-1.200.700-.800-.300-2.700 2.700.300 2.600-1.200 1-2.600-2.900-4 3.500 3.400-4.200-2.800-2.600 1-1.200 2.700.300 2.800-2.700-.400-.800z" fill="#3b7cf0"/><circle cx="24.500" cy="8.500" r="4.800" stroke="#555" stroke-width="1.500" stroke-dasharray="2.200 1.570"/><circle cx="24.500" cy="8.500" r="3.900" stroke="#555" stroke-width="1.100"/><circle cx="24.500" cy="8.500" r="1.900" stroke="#555" stroke-width="1.100"/><path d="M37 7.500h10" stroke="#555" stroke-width="1.200"/></svg><div class="abs" style="left:1px;top:24px;width:57px;height:26px;background:#fff;font-size:12px;line-height:26px;text-align:center;color:#3a62a8;font-weight:bold">全部层</div><div class="abs" style="left:58px;top:24px;width:57px;height:25px;background:#dcdcdc;border-left:1px solid #cfcfcf;font-size:12px;line-height:25px;text-align:center;color:#333">铜箔层</div><div class="abs" style="left:115px;top:24px;width:68px;height:25px;background:#dcdcdc;border-left:1px solid #cfcfcf;font-size:12px;line-height:25px;text-align:center;color:#333">非铜箔层</div><div class="abs" style="left:183px;top:24px;width:45px;height:25px;background:#dcdcdc;border-left:1px solid #cfcfcf;font-size:12px;line-height:25px;text-align:center;color:#333">元素</div><div class="lsw" style="top:53px;background:#ff0000"></div><div class="lrow" style="top:53px;background:#fff"><svg class="abs" style="left:6px;top:5px" width="18" height="14" viewBox="0 0 18 14"><path d="M1 7c2.500-3.600 5.300-5 8-5s5.500 1.400 8 5c-2.500 3.600-5.300 5-8 5s-5.500-1.400-8-5z" fill="#f4f4f4" stroke="#444" stroke-width="1.100"/><circle cx="9" cy="6.800" r="3.600" fill="#55556a"/><circle cx="9" cy="6.800" r="1.600" fill="#222"/><circle cx="7.800" cy="5.600" r=".9" fill="#ddd"/></svg><span style="position:absolute;left:31px">顶层</span></div><div class="lsw" style="top:77px;background:#0000ff"></div><div class="lrow" style="top:77px;background:#dcdcdc"><svg class="abs" style="left:6px;top:5px" width="18" height="14" viewBox="0 0 18 14"><path d="M1 7c2.500-3.600 5.300-5 8-5s5.500 1.400 8 5c-2.500 3.600-5.300 5-8 5s-5.500-1.400-8-5z" fill="#f4f4f4" stroke="#444" stroke-width="1.100"/><circle cx="9" cy="6.800" r="3.600" fill="#55556a"/><circle cx="9" cy="6.800" r="1.600" fill="#222"/><circle cx="7.800" cy="5.600" r=".9" fill="#ddd"/></svg><span style="position:absolute;left:31px">底层</span></div><div class="lsw" style="top:101px;background:#ffff00"></div><div class="lrow" style="top:101px;background:#dcdcdc"><svg class="abs" style="left:6px;top:5px" width="18" height="14" viewBox="0 0 18 14"><path d="M1 7c2.500-3.600 5.300-5 8-5s5.500 1.400 8 5c-2.500 3.600-5.300 5-8 5s-5.500-1.400-8-5z" fill="#f4f4f4" stroke="#444" stroke-width="1.100"/><circle cx="9" cy="6.800" r="3.600" fill="#55556a"/><circle cx="9" cy="6.800" r="1.600" fill="#222"/><circle cx="7.800" cy="5.600" r=".9" fill="#ddd"/></svg><span style="position:absolute;left:31px">顶层丝印层</span></div><div class="lsw" style="top:125px;background:#00ff00"></div><div class="lrow" style="top:125px;background:#dcdcdc"><svg class="abs" style="left:6px;top:5px" width="18" height="14" viewBox="0 0 18 14"><path d="M1 7c2.500-3.600 5.300-5 8-5s5.500 1.400 8 5c-2.500 3.600-5.300 5-8 5s-5.500-1.400-8-5z" fill="#f4f4f4" stroke="#444" stroke-width="1.100"/><circle cx="9" cy="6.800" r="3.600" fill="#55556a"/><circle cx="9" cy="6.800" r="1.600" fill="#222"/><circle cx="7.800" cy="5.600" r=".9" fill="#ddd"/></svg><span style="position:absolute;left:31px">底层丝印层</span></div><div class="lsw" style="top:149px;background:#808080"></div><div class="lrow" style="top:149px;background:#dcdcdc"><svg class="abs" style="left:6px;top:5px" width="18" height="14" viewBox="0 0 18 14"><path d="M1 7c2.500-3.600 5.300-5 8-5s5.500 1.400 8 5c-2.500 3.600-5.300 5-8 5s-5.500-1.400-8-5z" fill="#f4f4f4" stroke="#444" stroke-width="1.100"/><circle cx="9" cy="6.800" r="3.600" fill="#55556a"/><circle cx="9" cy="6.800" r="1.600" fill="#222"/><circle cx="7.800" cy="5.600" r=".9" fill="#ddd"/></svg><span style="position:absolute;left:31px">顶层锡膏层</span></div><div class="lsw" style="top:173px;background:#800000"></div><div class="lrow" style="top:173px;background:#dcdcdc"><svg class="abs" style="left:6px;top:5px" width="18" height="14" viewBox="0 0 18 14"><path d="M1 7c2.500-3.600 5.300-5 8-5s5.500 1.400 8 5c-2.500 3.600-5.300 5-8 5s-5.500-1.400-8-5z" fill="#f4f4f4" stroke="#444" stroke-width="1.100"/><circle cx="9" cy="6.800" r="3.600" fill="#55556a"/><circle cx="9" cy="6.800" r="1.600" fill="#222"/><circle cx="7.800" cy="5.600" r=".9" fill="#ddd"/></svg><span style="position:absolute;left:31px">底层锡膏层</span></div><div class="lsw" style="top:197px;background:#800080"></div><div class="lrow" style="top:197px;background:#dcdcdc"><svg class="abs" style="left:6px;top:5px" width="18" height="14" viewBox="0 0 18 14"><path d="M1 7c2.500-3.600 5.300-5 8-5s5.500 1.400 8 5c-2.500 3.600-5.300 5-8 5s-5.500-1.400-8-5z" fill="#f4f4f4" stroke="#444" stroke-width="1.100"/><circle cx="9" cy="6.800" r="3.600" fill="#55556a"/><circle cx="9" cy="6.800" r="1.600" fill="#222"/><circle cx="7.800" cy="5.600" r=".9" fill="#ddd"/></svg><span style="position:absolute;left:31px">顶层阻焊层</span></div><div class="lsw" style="top:221px;background:#00ccff"></div><div class="lrow" style="top:221px;background:#dcdcdc"><svg class="abs" style="left:6px;top:5px" width="18" height="14" viewBox="0 0 18 14"><path d="M1 7c2.500-3.600 5.300-5 8-5s5.500 1.400 8 5c-2.500 3.600-5.300 5-8 5s-5.500-1.400-8-5z" fill="#f4f4f4" stroke="#444" stroke-width="1.100"/><circle cx="9" cy="6.800" r="3.600" fill="#55556a"/><circle cx="9" cy="6.800" r="1.600" fill="#222"/><circle cx="7.800" cy="5.600" r=".9" fill="#ddd"/></svg><span style="position:absolute;left:31px">底层阻焊层</span></div><div class="lsw" style="top:245px;background:#6464ff"></div><div class="lrow" style="top:245px;background:#dcdcdc"><svg class="abs" style="left:6px;top:5px" width="18" height="14" viewBox="0 0 18 14"><path d="M1 7c2.500-3.600 5.300-5 8-5s5.500 1.400 8 5c-2.500 3.600-5.300 5-8 5s-5.500-1.400-8-5z" fill="#f4f4f4" stroke="#444" stroke-width="1.100"/><circle cx="9" cy="6.800" r="3.600" fill="#55556a"/><circle cx="9" cy="6.800" r="1.600" fill="#222"/><circle cx="7.800" cy="5.600" r=".9" fill="#ddd"/></svg><span style="position:absolute;left:31px">飞线层</span></div><div class="lsw" style="top:269px;background:#ff00ff"></div><div class="lrow" style="top:269px;background:#dcdcdc"><svg class="abs" style="left:6px;top:5px" width="18" height="14" viewBox="0 0 18 14"><path d="M1 7c2.500-3.600 5.300-5 8-5s5.500 1.400 8 5c-2.500 3.600-5.300 5-8 5s-5.500-1.400-8-5z" fill="#f4f4f4" stroke="#444" stroke-width="1.100"/><circle cx="9" cy="6.800" r="3.600" fill="#55556a"/><circle cx="9" cy="6.800" r="1.600" fill="#222"/><circle cx="7.800" cy="5.600" r=".9" fill="#ddd"/></svg><span style="position:absolute;left:31px">边框层</span></div><div class="lsw" style="top:293px;background:#c0c0c0"></div><div class="lrow" style="top:293px;background:#dcdcdc"><svg class="abs" style="left:6px;top:5px" width="18" height="14" viewBox="0 0 18 14"><path d="M1 7c2.500-3.600 5.300-5 8-5s5.500 1.400 8 5c-2.500 3.600-5.300 5-8 5s-5.500-1.400-8-5z" fill="#f4f4f4" stroke="#444" stroke-width="1.100"/><circle cx="9" cy="6.800" r="3.600" fill="#55556a"/><circle cx="9" cy="6.800" r="1.600" fill="#222"/><circle cx="7.800" cy="5.600" r=".9" fill="#ddd"/></svg><span style="position:absolute;left:31px">多层</span></div><div class="lsw" style="top:317px;background:#ffffff"></div><div class="lrow" style="top:317px;background:#dcdcdc"><svg class="abs" style="left:6px;top:5px" width="18" height="14" viewBox="0 0 18 14"><path d="M1 7c2.500-3.600 5.300-5 8-5s5.500 1.400 8 5c-2.500 3.600-5.300 5-8 5s-5.500-1.400-8-5z" fill="#f4f4f4" stroke="#444" stroke-width="1.100"/><circle cx="9" cy="6.800" r="3.600" fill="#55556a"/><circle cx="9" cy="6.800" r="1.600" fill="#222"/><circle cx="7.800" cy="5.600" r=".9" fill="#ddd"/></svg><span style="position:absolute;left:31px">文档层</span></div><div class="lsw" style="top:341px;background:#33cc99"></div><div class="lrow" style="top:341px;background:#dcdcdc"><svg class="abs" style="left:6px;top:5px" width="18" height="14" viewBox="0 0 18 14"><path d="M1 7c2.500-3.600 5.300-5 8-5s5.500 1.400 8 5c-2.500 3.600-5.300 5-8 5s-5.500-1.400-8-5z" fill="#f4f4f4" stroke="#444" stroke-width="1.100"/><circle cx="9" cy="6.800" r="3.600" fill="#55556a"/><circle cx="9" cy="6.800" r="1.600" fill="#222"/><circle cx="7.800" cy="5.600" r=".9" fill="#ddd"/></svg><span style="position:absolute;left:31px">顶层装配层</span></div><svg class="abs" style="left:5px;top:56px" width="24" height="20" viewBox="0 0 24 20"><path d="M3 17l2-6 10-9 4 4-10 9z" fill="#f7b23b" stroke="#c8781a" stroke-width=".8"/><path d="M15 2l2-1.500 4 4-2 1.500z" fill="#e88"/><path d="M3 17l2-6 4 4z" fill="#f3e3c3"/><path d="M3 17l.8-2.300 1.500 1.500z" fill="#333"/></svg><svg class="abs" style="left:228px;top:357px" width="14" height="14" viewBox="0 0 14 14"><path d="M13 2L2 13M13 6l-7 7M13 10l-3 3" stroke="#666" stroke-width="1"/></svg></div><div id="rpanel"><div class="abs" style="left:0;top:0;width:177px;height:33px;background:#dcdcdc"></div><div class="rl" style="top:0;line-height:33px">选中数量</div><div class="rl" style="left:78px;top:0;line-height:33px">0</div><div class="rsec" style="top:33px">画布属性</div><svg class="abs" style="left:9px;top:42px" width="10" height="10" viewBox="0 0 10 10"><path d="M8.500 1.500v7h-7z" fill="#cfcfcf"/></svg><div class="rl" style="top:63px">单位</div><div class="rin" style="top:67px;padding-left:9px;font-size:14px">mm<svg style="position:absolute;right:0;top:0;background:#fff;padding:7px 4px 7px 3px;box-sizing:content-box" width="11" height="8" viewBox="0 0 11 8"><path d="M1.500 1.500l4 4 4-4" fill="none" stroke="#222" stroke-width="1.600"/></svg></div><div class="rl" style="top:93px">背景色</div><div class="rin" style="top:97px;background:#000;color:#fff;border-color:#000">#000000</div><div class="rsec" style="top:123px">网格</div><svg class="abs" style="left:9px;top:132px" width="10" height="10" viewBox="0 0 10 10"><path d="M8.500 1.500v7h-7z" fill="#cfcfcf"/></svg><div class="rl" style="top:153px">网格可见</div><div class="rin" style="top:157px;padding-left:9px;font-size:14px">是<svg style="position:absolute;right:0;top:0;background:#fff;padding:7px 4px 7px 3px;box-sizing:content-box" width="11" height="8" viewBox="0 0 11 8"><path d="M1.500 1.500l4 4 4-4" fill="none" stroke="#222" stroke-width="1.600"/></svg></div><div class="rl" style="top:183px">网格颜色</div><div class="rin" style="top:187px">#FFFFFF</div><div class="rl" style="top:213px">网格样式</div><div class="rin" style="top:217px;padding-left:9px;font-size:14px">实线<svg style="position:absolute;right:0;top:0;background:#fff;padding:7px 4px 7px 3px;box-sizing:content-box" width="11" height="8" viewBox="0 0 11 8"><path d="M1.500 1.500l4 4 4-4" fill="none" stroke="#222" stroke-width="1.600"/></svg></div><div class="rl" style="top:243px">吸附</div><div class="rin" style="top:247px;padding-left:9px;font-size:14px">是<svg style="position:absolute;right:0;top:0;background:#fff;padding:7px 4px 7px 3px;box-sizing:content-box" width="11" height="8" viewBox="0 0 11 8"><path d="M1.500 1.500l4 4 4-4" fill="none" stroke="#222" stroke-width="1.600"/></svg></div><div class="rl" style="top:273px">网格大小</div><div class="rin" style="top:277px">2.540mm</div><div class="rl" style="top:303px">栅格尺寸</div><div class="rin" style="top:307px">0.100mm</div><div class="rl" style="top:333px">ALT键栅格</div><div class="rin" style="top:337px">0.127mm</div><div class="rsec" style="top:363px">其它</div><svg class="abs" style="left:9px;top:372px" width="10" height="10" viewBox="0 0 10 10"><path d="M8.500 1.500v7h-7z" fill="#cfcfcf"/></svg><div class="rl" style="top:393px">线宽</div><div class="rin" style="top:397px">0.700mm</div><div class="rl" style="top:423px">拐角</div><div class="rin" style="top:427px;padding-left:9px;font-size:14px">线条45<svg style="position:absolute;right:0;top:0;background:#fff;padding:7px 4px 7px 3px;box-sizing:content-box" width="11" height="8" viewBox="0 0 11 8"><path d="M1.500 1.500l4 4 4-4" fill="none" stroke="#222" stroke-width="1.600"/></svg></div><div class="rl" style="top:453px">布线冲突</div><div class="rin" style="top:457px;padding-left:9px;font-size:14px">忽略<svg style="position:absolute;right:0;top:0;background:#fff;padding:7px 4px 7px 3px;box-sizing:content-box" width="11" height="8" viewBox="0 0 11 8"><path d="M1.500 1.500l4 4 4-4" fill="none" stroke="#222" stroke-width="1.600"/></svg></div><div class="rl" style="top:483px">移除回路</div><div class="rin" style="top:487px;padding-left:9px;font-size:14px">是<svg style="position:absolute;right:0;top:0;background:#fff;padding:7px 4px 7px 3px;box-sizing:content-box" width="11" height="8" viewBox="0 0 11 8"><path d="M1.500 1.500l4 4 4-4" fill="none" stroke="#222" stroke-width="1.600"/></svg></div><div class="rl" style="top:513px">铺铜区</div><div class="rin" style="top:517px;padding-left:9px;font-size:14px">可见<svg style="position:absolute;right:0;top:0;background:#fff;padding:7px 4px 7px 3px;box-sizing:content-box" width="11" height="8" viewBox="0 0 11 8"><path d="M1.500 1.500l4 4 4-4" fill="none" stroke="#222" stroke-width="1.600"/></svg></div><div class="abs" style="left:0;top:543px;width:177px;height:130px;background:#dcdcdc"></div><div class="abs" style="left:1px;top:554px;width:176px;height:24px;background:#eee;border-top:1px solid #d4d4d4"></div><div class="abs" style="left:88px;top:554px;width:1px;height:24px;background:#d4d4d4"></div><div class="rl" style="top:555px;line-height:24px">光标X</div><div class="rl" style="left:94px;top:553px;line-height:24px;font-size:13px">-37.700mm</div><div class="abs" style="left:1px;top:578px;width:176px;height:24px;background:#eee;border-top:1px solid #d4d4d4"></div><div class="abs" style="left:88px;top:578px;width:1px;height:24px;background:#d4d4d4"></div><div class="rl" style="top:579px;line-height:24px">光标Y</div><div class="rl" style="left:94px;top:577px;line-height:24px;font-size:13px">21.600mm</div><div class="abs" style="left:1px;top:602px;width:176px;height:24px;background:#eee;border-top:1px solid #d4d4d4"></div><div class="abs" style="left:88px;top:602px;width:1px;height:24px;background:#d4d4d4"></div><div class="rl" style="top:603px;line-height:24px">光标DX</div><div class="rl" style="left:94px;top:601px;line-height:24px;font-size:13px">-39.255mm</div><div class="abs" style="left:1px;top:626px;width:176px;height:24px;background:#eee;border-top:1px solid #d4d4d4"></div><div class="abs" style="left:88px;top:626px;width:1px;height:24px;background:#d4d4d4"></div><div class="rl" style="top:627px;line-height:24px">光标DY</div><div class="rl" style="left:94px;top:625px;line-height:24px;font-size:13px">5.080mm</div><div class="abs" style="left:1px;top:650px;width:176px;height:1px;background:#d4d4d4"></div></div></body></html>
